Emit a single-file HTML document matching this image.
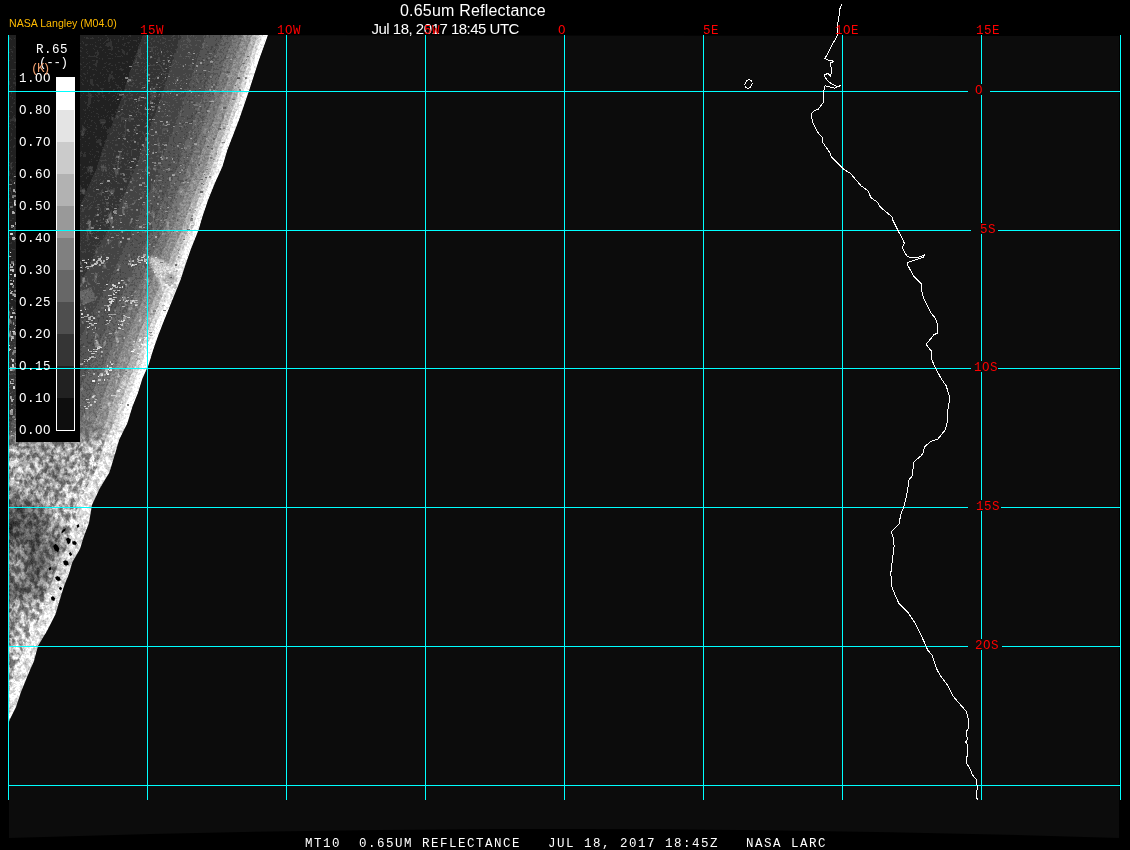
<!DOCTYPE html>
<html><head><meta charset="utf-8"><style>
html,body{margin:0;padding:0;background:#000;width:1130px;height:850px;overflow:hidden}
svg{display:block;will-change:transform}
.mono{font-family:"Liberation Mono",monospace}
.sans{font-family:"Liberation Sans",sans-serif}
</style></head><body>
<svg width="1130" height="850" viewBox="0 0 1130 850">
<defs>
<clipPath id="sw"><polygon points="268,35 259,60 249,91 239,120 227.4,150 222.5,166.5 215,183 208.5,199 202.7,216 198.6,230 191,249 185.4,265 180.5,280 174.8,294 169.2,308 163.5,322 157.9,336.5 153,350.6 148.7,364.7 142.4,378.8 138,393 132.5,406.5 127.5,423 119.3,439.4 114.4,456 109.4,472.4 99.5,489 92,505 89,523 84,536 80,549 72.5,562 68.6,575 63.4,588 59.5,601 55.6,614 47,631 38,646 34,661 27.5,676 21,692 16,707 10,719 9,722 9,722 9,35"/></clipPath>
<filter color-interpolation-filters="sRGB" id="blur" x="0" y="0" width="1130" height="850" filterUnits="userSpaceOnUse"><feGaussianBlur stdDeviation="5" result="b"/>
<feTurbulence type="fractalNoise" baseFrequency="0.2 0.15" numOctaves="3" seed="21" result="n"/>
<feColorMatrix in="n" type="matrix" values="3 0 0 0 -1  3 0 0 0 -1  3 0 0 0 -1  0 0 0 0 1" result="nc"/>
<feComposite in="b" in2="nc" operator="arithmetic" k1="0.7" k2="0.65" k3="0" k4="0"/>
</filter>
<filter color-interpolation-filters="sRGB" id="soft" x="-0.2" y="-0.2" width="1.4" height="1.4"><feGaussianBlur stdDeviation="1.5"/></filter>
<filter color-interpolation-filters="sRGB" id="cloudA" x="0" y="0" width="1" height="1">
<feTurbulence type="fractalNoise" baseFrequency="0.14 0.08" numOctaves="4" seed="3"/>
<feColorMatrix type="matrix" values="0 0 0 0 1  0 0 0 0 1  0 0 0 0 1  6 0 0 0 -3.9"/>
</filter>
<filter color-interpolation-filters="sRGB" id="tex" x="0" y="0" width="1130" height="850" filterUnits="userSpaceOnUse">
<feTurbulence type="fractalNoise" baseFrequency="0.45" numOctaves="2" seed="5" result="n"/>
<feColorMatrix in="n" type="matrix" values="2 0 0 0 -0.5  2 0 0 0 -0.5  2 0 0 0 -0.5  0 0 0 0 1" result="nc"/>
<feComposite in="SourceGraphic" in2="nc" operator="arithmetic" k1="0.25" k2="0.875" k3="0" k4="0" result="m"/>
<feComponentTransfer in="m"><feFuncR type="discrete" tableValues="0.000 0.067 0.133 0.200 0.267 0.333 0.400 0.467 0.533 0.600 0.667 0.733 0.800 0.867 0.933 1.000"/><feFuncG type="discrete" tableValues="0.000 0.067 0.133 0.200 0.267 0.333 0.400 0.467 0.533 0.600 0.667 0.733 0.800 0.867 0.933 1.000"/><feFuncB type="discrete" tableValues="0.000 0.067 0.133 0.200 0.267 0.333 0.400 0.467 0.533 0.600 0.667 0.733 0.800 0.867 0.933 1.000"/></feComponentTransfer>
</filter>
<filter color-interpolation-filters="sRGB" id="specW" x="0" y="0" width="1" height="1">
<feTurbulence type="fractalNoise" baseFrequency="0.35" numOctaves="2" seed="5"/>
<feColorMatrix type="matrix" values="0 0 0 0 1  0 0 0 0 1  0 0 0 0 1  6 0 0 0 -3.2"/>
</filter>
<filter color-interpolation-filters="sRGB" id="specK" x="0" y="0" width="1" height="1">
<feTurbulence type="fractalNoise" baseFrequency="0.35" numOctaves="2" seed="9"/>
<feColorMatrix type="matrix" values="0 0 0 0 0  0 0 0 0 0  0 0 0 0 0  6 0 0 0 -3.2"/>
</filter>
<linearGradient id="gB" x1="0" y1="415" x2="0" y2="450" gradientUnits="userSpaceOnUse">
<stop offset="0" stop-color="#fff" stop-opacity="0"/>
<stop offset="1" stop-color="#fff" stop-opacity="1"/>
</linearGradient>
<linearGradient id="gA" x1="0" y1="80" x2="0" y2="430" gradientUnits="userSpaceOnUse">
<stop offset="0" stop-color="#fff" stop-opacity="0.15"/>
<stop offset="1" stop-color="#fff" stop-opacity="1"/>
</linearGradient>
<mask id="mB"><rect x="0" y="400" width="280" height="330" fill="url(#gB)"/></mask>
<mask id="mA"><rect x="0" y="35" width="280" height="420" fill="url(#gA)"/></mask>
</defs>
<rect width="1130" height="850" fill="#000"/>
<path d="M9,35 L1119,36 L1119,838 Q565,820 9,838 Z" fill="#0c0c0c"/>
<g clip-path="url(#sw)"><g filter="url(#tex)">
<rect x="9" y="35" width="260" height="690" fill="#2c2c2c"/>
<polygon points="268.0,35.0 259.0,60.0 249.0,91.0 239.0,120.0 227.4,150.0 222.5,166.5 215.0,183.0 208.5,199.0 202.7,216.0 198.6,230.0 191.0,249.0 185.4,265.0 180.5,280.0 174.8,294.0 169.2,308.0 163.5,322.0 157.9,336.5 153.0,350.6 148.7,364.7 142.4,378.8 138.0,393.0 132.5,406.5 127.5,423.0 119.3,439.4 114.4,456.0 109.4,472.4 99.5,489.0 92.0,505.0 89.0,523.0 84.0,536.0 80.0,549.0 72.5,562.0 68.6,575.0 63.4,588.0 59.5,601.0 55.6,614.0 47.0,631.0 38.0,646.0 34.0,661.0 27.5,676.0 21.0,692.0 16.0,707.0 10.0,719.0 9.0,722.0 9.0,722.0 9.0,719.0 9.0,707.0 9.0,692.0 9.0,676.0 9.0,661.0 9.0,646.0 9.0,631.0 9.0,614.0 9.0,601.0 9.0,588.0 9.0,575.0 9.0,562.0 9.0,549.0 9.0,536.0 9.0,523.0 9.0,505.0 9.0,489.0 9.0,472.4 9.0,456.0 9.0,439.4 9.0,423.0 9.0,406.5 9.0,393.0 9.0,378.8 9.0,364.7 9.0,350.6 9.0,336.5 11.8,322.0 20.6,308.0 29.2,294.0 38.0,280.0 46.2,265.0 55.3,249.0 67.0,230.0 74.2,216.0 83.5,199.0 90.0,183.0 97.5,166.5 102.4,150.0 114.0,120.0 124.0,91.0 134.0,60.0 143.0,35.0" fill="#3c3c3c"/>
<polygon points="268.0,35.0 259.0,60.0 249.0,91.0 239.0,120.0 227.4,150.0 222.5,166.5 215.0,183.0 208.5,199.0 202.7,216.0 198.6,230.0 191.0,249.0 185.4,265.0 180.5,280.0 174.8,294.0 169.2,308.0 163.5,322.0 157.9,336.5 153.0,350.6 148.7,364.7 142.4,378.8 138.0,393.0 132.5,406.5 127.5,423.0 119.3,439.4 114.4,456.0 109.4,472.4 99.5,489.0 92.0,505.0 89.0,523.0 84.0,536.0 80.0,549.0 72.5,562.0 68.6,575.0 63.4,588.0 59.5,601.0 55.6,614.0 47.0,631.0 38.0,646.0 34.0,661.0 27.5,676.0 21.0,692.0 16.0,707.0 10.0,719.0 9.0,722.0 9.0,722.0 9.0,719.0 9.0,707.0 9.0,692.0 9.0,676.0 9.0,661.0 9.0,646.0 9.0,631.0 9.0,614.0 9.0,601.0 9.0,588.0 9.0,575.0 9.0,562.0 9.0,549.0 9.0,536.0 9.0,523.0 9.0,505.0 9.0,489.0 9.0,472.4 9.0,456.0 9.0,439.4 11.4,423.0 16.4,406.5 23.0,393.0 29.5,378.8 37.9,364.7 44.3,350.6 51.4,336.5 59.1,322.0 66.9,308.0 74.7,294.0 82.5,280.0 89.6,265.0 97.6,249.0 108.1,230.0 114.3,216.0 122.5,199.0 129.0,183.0 136.5,166.5 141.4,150.0 153.0,120.0 163.0,91.0 173.0,60.0 182.0,35.0" fill="#4a4a4a"/>
<polygon points="268.0,35.0 259.0,60.0 249.0,91.0 239.0,120.0 227.4,150.0 222.5,166.5 215.0,183.0 208.5,199.0 202.7,216.0 198.6,230.0 191.0,249.0 185.4,265.0 180.5,280.0 174.8,294.0 169.2,308.0 163.5,322.0 157.9,336.5 153.0,350.6 148.7,364.7 142.4,378.8 138.0,393.0 132.5,406.5 127.5,423.0 119.3,439.4 114.4,456.0 109.4,472.4 99.5,489.0 92.0,505.0 89.0,523.0 84.0,536.0 80.0,549.0 72.5,562.0 68.6,575.0 63.4,588.0 59.5,601.0 55.6,614.0 47.0,631.0 38.0,646.0 34.0,661.0 27.5,676.0 21.0,692.0 16.0,707.0 10.0,719.0 9.0,722.0 9.0,722.0 9.0,719.0 9.0,707.0 9.0,692.0 9.0,676.0 9.0,661.0 9.0,646.0 9.0,631.0 9.0,614.0 9.0,601.0 9.0,588.0 9.0,575.0 9.0,562.0 9.0,549.0 9.0,536.0 9.0,523.0 9.0,505.0 15.8,489.0 25.7,472.4 30.7,456.0 35.6,439.4 43.8,423.0 48.8,406.5 55.1,393.0 61.0,378.8 68.8,364.7 74.7,350.6 81.1,336.5 88.3,322.0 95.5,308.0 102.6,294.0 109.8,280.0 116.3,265.0 123.7,249.0 133.3,230.0 139.0,216.0 146.5,199.0 153.0,183.0 160.5,166.5 165.4,150.0 177.0,120.0 187.0,91.0 197.0,60.0 206.0,35.0" fill="#555555"/>
<polygon points="268.0,35.0 259.0,60.0 249.0,91.0 239.0,120.0 227.4,150.0 222.5,166.5 215.0,183.0 208.5,199.0 202.7,216.0 198.6,230.0 191.0,249.0 185.4,265.0 180.5,280.0 174.8,294.0 169.2,308.0 163.5,322.0 157.9,336.5 153.0,350.6 148.7,364.7 142.4,378.8 138.0,393.0 132.5,406.5 127.5,423.0 119.3,439.4 114.4,456.0 109.4,472.4 99.5,489.0 92.0,505.0 89.0,523.0 84.0,536.0 80.0,549.0 72.5,562.0 68.6,575.0 63.4,588.0 59.5,601.0 55.6,614.0 47.0,631.0 38.0,646.0 34.0,661.0 27.5,676.0 21.0,692.0 16.0,707.0 10.0,719.0 9.0,722.0 9.0,722.0 9.0,719.0 9.0,707.0 9.0,692.0 9.0,676.0 9.0,661.0 9.0,646.0 9.0,631.0 9.0,614.0 9.0,601.0 9.0,588.0 9.0,575.0 11.7,562.0 19.2,549.0 23.2,536.0 28.2,523.0 31.2,505.0 38.7,489.0 48.6,472.4 53.6,456.0 58.5,439.4 66.8,423.0 71.8,406.5 77.8,393.0 83.3,378.8 90.7,364.7 96.1,350.6 102.2,336.5 108.9,322.0 115.7,308.0 122.4,294.0 129.2,280.0 135.3,265.0 142.1,249.0 151.2,230.0 156.4,216.0 163.5,199.0 170.0,183.0 177.5,166.5 182.4,150.0 194.0,120.0 204.0,91.0 214.0,60.0 223.0,35.0" fill="#626262"/>
<polygon points="268.0,35.0 259.0,60.0 249.0,91.0 239.0,120.0 227.4,150.0 222.5,166.5 215.0,183.0 208.5,199.0 202.7,216.0 198.6,230.0 191.0,249.0 185.4,265.0 180.5,280.0 174.8,294.0 169.2,308.0 163.5,322.0 157.9,336.5 153.0,350.6 148.7,364.7 142.4,378.8 138.0,393.0 132.5,406.5 127.5,423.0 119.3,439.4 114.4,456.0 109.4,472.4 99.5,489.0 92.0,505.0 89.0,523.0 84.0,536.0 80.0,549.0 72.5,562.0 68.6,575.0 63.4,588.0 59.5,601.0 55.6,614.0 47.0,631.0 38.0,646.0 34.0,661.0 27.5,676.0 21.0,692.0 16.0,707.0 10.0,719.0 9.0,722.0 9.0,722.0 9.0,719.0 9.0,707.0 9.0,692.0 9.0,676.0 9.0,661.0 9.0,646.0 9.0,631.0 9.7,614.0 13.6,601.0 17.5,588.0 22.7,575.0 26.6,562.0 34.1,549.0 38.1,536.0 43.1,523.0 46.1,505.0 53.6,489.0 63.5,472.4 68.5,456.0 73.4,439.4 81.6,423.0 86.6,406.5 92.5,393.0 97.8,378.8 104.9,364.7 110.0,350.6 115.8,336.5 122.2,322.0 128.8,308.0 135.2,294.0 141.7,280.0 147.5,265.0 154.1,249.0 162.8,230.0 167.7,216.0 174.5,199.0 181.0,183.0 188.5,166.5 193.4,150.0 205.0,120.0 215.0,91.0 225.0,60.0 234.0,35.0" fill="#747474"/>
<polygon points="268.0,35.0 259.0,60.0 249.0,91.0 239.0,120.0 227.4,150.0 222.5,166.5 215.0,183.0 208.5,199.0 202.7,216.0 198.6,230.0 191.0,249.0 185.4,265.0 180.5,280.0 174.8,294.0 169.2,308.0 163.5,322.0 157.9,336.5 153.0,350.6 148.7,364.7 142.4,378.8 138.0,393.0 132.5,406.5 127.5,423.0 119.3,439.4 114.4,456.0 109.4,472.4 99.5,489.0 92.0,505.0 89.0,523.0 84.0,536.0 80.0,549.0 72.5,562.0 68.6,575.0 63.4,588.0 59.5,601.0 55.6,614.0 47.0,631.0 38.0,646.0 34.0,661.0 27.5,676.0 21.0,692.0 16.0,707.0 10.0,719.0 9.0,722.0 9.0,722.0 9.0,719.0 9.0,707.0 9.0,692.0 9.0,676.0 9.0,661.0 9.0,646.0 13.2,631.0 21.9,614.0 25.8,601.0 29.6,588.0 34.8,575.0 38.8,562.0 46.2,549.0 50.2,536.0 55.2,523.0 58.2,505.0 65.8,489.0 75.7,472.4 80.7,456.0 85.5,439.4 93.8,423.0 98.8,406.5 104.6,393.0 109.6,378.8 116.5,364.7 121.4,350.6 126.9,336.5 133.2,322.0 139.5,308.0 145.7,294.0 152.0,280.0 157.6,265.0 163.9,249.0 172.3,230.0 177.0,216.0 183.5,199.0 190.0,183.0 197.5,166.5 202.4,150.0 214.0,120.0 224.0,91.0 234.0,60.0 243.0,35.0" fill="#8c8c8c"/>
<polygon points="268.0,35.0 259.0,60.0 249.0,91.0 239.0,120.0 227.4,150.0 222.5,166.5 215.0,183.0 208.5,199.0 202.7,216.0 198.6,230.0 191.0,249.0 185.4,265.0 180.5,280.0 174.8,294.0 169.2,308.0 163.5,322.0 157.9,336.5 153.0,350.6 148.7,364.7 142.4,378.8 138.0,393.0 132.5,406.5 127.5,423.0 119.3,439.4 114.4,456.0 109.4,472.4 99.5,489.0 92.0,505.0 89.0,523.0 84.0,536.0 80.0,549.0 72.5,562.0 68.6,575.0 63.4,588.0 59.5,601.0 55.6,614.0 47.0,631.0 38.0,646.0 34.0,661.0 27.5,676.0 21.0,692.0 16.0,707.0 10.0,719.0 9.0,722.0 9.0,722.0 9.0,719.0 9.0,707.0 9.0,692.0 9.0,676.0 12.4,661.0 16.4,646.0 25.4,631.0 34.0,614.0 37.9,601.0 41.8,588.0 47.0,575.0 50.9,562.0 58.4,549.0 62.4,536.0 67.4,523.0 70.4,505.0 77.9,489.0 87.8,472.4 92.8,456.0 97.7,439.4 105.9,423.0 110.9,406.5 116.6,393.0 121.4,378.8 128.1,364.7 132.8,350.6 138.1,336.5 144.1,322.0 150.2,308.0 156.2,294.0 162.3,280.0 167.6,265.0 173.6,249.0 181.8,230.0 186.3,216.0 192.5,199.0 199.0,183.0 206.5,166.5 211.4,150.0 223.0,120.0 233.0,91.0 243.0,60.0 252.0,35.0" fill="#adadad"/>
<polygon points="268.0,35.0 259.0,60.0 249.0,91.0 239.0,120.0 227.4,150.0 222.5,166.5 215.0,183.0 208.5,199.0 202.7,216.0 198.6,230.0 191.0,249.0 185.4,265.0 180.5,280.0 174.8,294.0 169.2,308.0 163.5,322.0 157.9,336.5 153.0,350.6 148.7,364.7 142.4,378.8 138.0,393.0 132.5,406.5 127.5,423.0 119.3,439.4 114.4,456.0 109.4,472.4 99.5,489.0 92.0,505.0 89.0,523.0 84.0,536.0 80.0,549.0 72.5,562.0 68.6,575.0 63.4,588.0 59.5,601.0 55.6,614.0 47.0,631.0 38.0,646.0 34.0,661.0 27.5,676.0 21.0,692.0 16.0,707.0 10.0,719.0 9.0,722.0 9.0,722.0 9.0,719.0 9.0,707.0 9.0,692.0 14.0,676.0 20.5,661.0 24.5,646.0 33.5,631.0 42.1,614.0 46.0,601.0 49.9,588.0 55.1,575.0 59.0,562.0 66.5,549.0 70.5,536.0 75.5,523.0 78.5,505.0 86.0,489.0 95.9,472.4 100.9,456.0 105.8,439.4 114.0,423.0 119.0,406.5 124.6,393.0 129.3,378.8 135.8,364.7 140.4,350.6 145.5,336.5 151.4,322.0 157.3,308.0 163.2,294.0 169.1,280.0 174.3,265.0 180.1,249.0 188.1,230.0 192.4,216.0 198.5,199.0 205.0,183.0 212.5,166.5 217.4,150.0 229.0,120.0 239.0,91.0 249.0,60.0 258.0,35.0" fill="#d4d4d4"/>
<polygon points="268.0,35.0 259.0,60.0 249.0,91.0 239.0,120.0 227.4,150.0 222.5,166.5 215.0,183.0 208.5,199.0 202.7,216.0 198.6,230.0 191.0,249.0 185.4,265.0 180.5,280.0 174.8,294.0 169.2,308.0 163.5,322.0 157.9,336.5 153.0,350.6 148.7,364.7 142.4,378.8 138.0,393.0 132.5,406.5 127.5,423.0 119.3,439.4 114.4,456.0 109.4,472.4 99.5,489.0 92.0,505.0 89.0,523.0 84.0,536.0 80.0,549.0 72.5,562.0 68.6,575.0 63.4,588.0 59.5,601.0 55.6,614.0 47.0,631.0 38.0,646.0 34.0,661.0 27.5,676.0 21.0,692.0 16.0,707.0 10.0,719.0 9.0,722.0 9.0,722.0 9.0,719.0 9.0,707.0 13.6,692.0 20.1,676.0 26.6,661.0 30.6,646.0 39.6,631.0 48.2,614.0 52.1,601.0 56.0,588.0 61.2,575.0 65.1,562.0 72.6,549.0 76.6,536.0 81.6,523.0 84.6,505.0 92.1,489.0 102.0,472.4 107.0,456.0 111.9,439.4 120.1,423.0 125.1,406.5 130.6,393.0 135.2,378.8 141.6,364.7 146.1,350.6 151.1,336.5 156.8,322.0 162.7,308.0 168.4,294.0 174.2,280.0 179.3,265.0 185.0,249.0 192.8,230.0 197.0,216.0 203.0,199.0 209.5,183.0 217.0,166.5 221.9,150.0 233.5,120.0 243.5,91.0 253.5,60.0 262.5,35.0" fill="#f6f6f6"/>
<g filter="url(#soft)"><polygon points="148,257 158,258 170,265 185,262 194,254 190,268 184,283 176,298 168,305 163,296 160,284 153,270" fill="#dedede" opacity="0.7"/><polygon points="165,274 172,272 177,278 173,284 166,283" fill="#909090" opacity="0.7"/></g>
<g opacity="0.85"><rect x="129" y="264" width="2" height="1" fill="rgb(188,188,188)"/><rect x="131" y="265" width="1" height="2" fill="rgb(214,214,214)"/><rect x="132" y="264" width="2" height="2" fill="rgb(237,237,237)"/><rect x="134" y="264" width="3" height="1" fill="rgb(217,217,217)"/><rect x="129" y="261" width="1" height="1" fill="rgb(214,214,214)"/><rect x="133" y="264" width="2" height="1" fill="rgb(171,171,171)"/><rect x="133" y="264" width="2" height="2" fill="rgb(193,193,193)"/><rect x="137" y="258" width="1" height="1" fill="rgb(170,170,170)"/><rect x="132" y="260" width="2" height="2" fill="rgb(184,184,184)"/><rect x="137" y="261" width="2" height="1" fill="rgb(170,170,170)"/><rect x="141" y="257" width="3" height="1" fill="rgb(218,218,218)"/><rect x="137" y="259" width="2" height="1" fill="rgb(186,186,186)"/><rect x="138" y="257" width="1" height="2" fill="rgb(181,181,181)"/><rect x="138" y="260" width="3" height="1" fill="rgb(194,194,194)"/><rect x="144" y="260" width="2" height="2" fill="rgb(201,201,201)"/><rect x="143" y="256" width="2" height="1" fill="rgb(200,200,200)"/><rect x="141" y="260" width="2" height="1" fill="rgb(223,223,223)"/><rect x="138" y="262" width="3" height="1" fill="rgb(193,193,193)"/><rect x="146" y="262" width="2" height="2" fill="rgb(234,234,234)"/><rect x="141" y="259" width="2" height="1" fill="rgb(177,177,177)"/><rect x="144" y="258" width="1" height="1" fill="rgb(179,179,179)"/><rect x="143" y="254" width="3" height="2" fill="rgb(168,168,168)"/><rect x="144" y="259" width="3" height="2" fill="rgb(192,192,192)"/><rect x="153" y="257" width="1" height="2" fill="rgb(174,174,174)"/><rect x="147" y="256" width="2" height="2" fill="rgb(203,203,203)"/><rect x="151" y="261" width="3" height="1" fill="rgb(193,193,193)"/><rect x="154" y="259" width="1" height="2" fill="rgb(198,198,198)"/><rect x="152" y="258" width="2" height="1" fill="rgb(207,207,207)"/><rect x="151" y="258" width="1" height="2" fill="rgb(201,201,201)"/><rect x="150" y="262" width="2" height="1" fill="rgb(190,190,190)"/><rect x="156" y="265" width="1" height="1" fill="rgb(222,222,222)"/><rect x="155" y="257" width="2" height="1" fill="rgb(220,220,220)"/><rect x="154" y="264" width="3" height="1" fill="rgb(229,229,229)"/><rect x="153" y="261" width="2" height="1" fill="rgb(207,207,207)"/><rect x="151" y="267" width="1" height="1" fill="rgb(188,188,188)"/><rect x="154" y="267" width="2" height="2" fill="rgb(188,188,188)"/><rect x="158" y="267" width="1" height="1" fill="rgb(168,168,168)"/><rect x="159" y="265" width="1" height="2" fill="rgb(190,190,190)"/><rect x="154" y="271" width="2" height="2" fill="rgb(233,233,233)"/><rect x="154" y="267" width="3" height="1" fill="rgb(184,184,184)"/><rect x="160" y="271" width="2" height="1" fill="rgb(212,212,212)"/><rect x="153" y="270" width="1" height="1" fill="rgb(211,211,211)"/><rect x="158" y="265" width="1" height="1" fill="rgb(184,184,184)"/><rect x="160" y="272" width="3" height="1" fill="rgb(195,195,195)"/><rect x="155" y="271" width="1" height="1" fill="rgb(230,230,230)"/><rect x="164" y="272" width="1" height="1" fill="rgb(190,190,190)"/><rect x="163" y="273" width="2" height="1" fill="rgb(167,167,167)"/><rect x="162" y="271" width="3" height="1" fill="rgb(218,218,218)"/><rect x="162" y="275" width="3" height="1" fill="rgb(184,184,184)"/><rect x="162" y="278" width="1" height="2" fill="rgb(200,200,200)"/><rect x="168" y="273" width="2" height="1" fill="rgb(225,225,225)"/><rect x="167" y="273" width="1" height="2" fill="rgb(190,190,190)"/><rect x="161" y="276" width="2" height="2" fill="rgb(236,236,236)"/><rect x="167" y="273" width="2" height="1" fill="rgb(186,186,186)"/><rect x="166" y="270" width="2" height="1" fill="rgb(176,176,176)"/><rect x="167" y="270" width="2" height="1" fill="rgb(161,161,161)"/><rect x="160" y="274" width="1" height="1" fill="rgb(228,228,228)"/><rect x="170" y="273" width="2" height="1" fill="rgb(191,191,191)"/><rect x="169" y="271" width="2" height="2" fill="rgb(227,227,227)"/><rect x="176" y="270" width="2" height="2" fill="rgb(173,173,173)"/><rect x="173" y="269" width="1" height="1" fill="rgb(230,230,230)"/><rect x="174" y="271" width="2" height="2" fill="rgb(203,203,203)"/><rect x="174" y="272" width="2" height="2" fill="rgb(222,222,222)"/><rect x="174" y="274" width="1" height="1" fill="rgb(214,214,214)"/><rect x="175" y="267" width="2" height="1" fill="rgb(193,193,193)"/><rect x="163" y="279" width="3" height="2" fill="rgb(161,161,161)"/><rect x="167" y="281" width="2" height="2" fill="rgb(164,164,164)"/><rect x="164" y="275" width="2" height="1" fill="rgb(176,176,176)"/><rect x="165" y="280" width="1" height="1" fill="rgb(186,186,186)"/><rect x="162" y="276" width="2" height="2" fill="rgb(212,212,212)"/><rect x="168" y="280" width="2" height="1" fill="rgb(182,182,182)"/><rect x="165" y="281" width="2" height="1" fill="rgb(191,191,191)"/><rect x="164" y="286" width="1" height="1" fill="rgb(164,164,164)"/><rect x="166" y="281" width="3" height="1" fill="rgb(199,199,199)"/><rect x="168" y="279" width="2" height="1" fill="rgb(184,184,184)"/><rect x="164" y="285" width="1" height="1" fill="rgb(204,204,204)"/><rect x="165" y="283" width="2" height="1" fill="rgb(174,174,174)"/><rect x="168" y="284" width="2" height="1" fill="rgb(173,173,173)"/><rect x="165" y="284" width="2" height="1" fill="rgb(237,237,237)"/><rect x="169" y="285" width="2" height="1" fill="rgb(165,165,165)"/><rect x="169" y="284" width="2" height="1" fill="rgb(215,215,215)"/><rect x="173" y="286" width="2" height="2" fill="rgb(200,200,200)"/><rect x="170" y="283" width="2" height="2" fill="rgb(199,199,199)"/><rect x="170" y="282" width="2" height="2" fill="rgb(176,176,176)"/><rect x="174" y="287" width="3" height="2" fill="rgb(182,182,182)"/><rect x="172" y="282" width="1" height="1" fill="rgb(196,196,196)"/><rect x="175" y="288" width="2" height="1" fill="rgb(216,216,216)"/><rect x="173" y="284" width="3" height="2" fill="rgb(181,181,181)"/><rect x="103" y="290" width="2" height="1" fill="rgb(190,190,190)"/><rect x="104" y="290" width="2" height="1" fill="rgb(163,163,163)"/><rect x="113" y="293" width="1" height="1" fill="rgb(213,213,213)"/><rect x="109" y="289" width="3" height="1" fill="rgb(211,211,211)"/><rect x="108" y="295" width="1" height="1" fill="rgb(214,214,214)"/><rect x="109" y="295" width="3" height="1" fill="rgb(231,231,231)"/><rect x="109" y="295" width="3" height="1" fill="rgb(219,219,219)"/><rect x="106" y="284" width="2" height="1" fill="rgb(238,238,238)"/><rect x="113" y="285" width="3" height="2" fill="rgb(217,217,217)"/><rect x="115" y="287" width="3" height="1" fill="rgb(193,193,193)"/><rect x="112" y="284" width="2" height="2" fill="rgb(222,222,222)"/><rect x="112" y="287" width="1" height="2" fill="rgb(196,196,196)"/><rect x="114" y="291" width="1" height="1" fill="rgb(179,179,179)"/><rect x="115" y="292" width="2" height="1" fill="rgb(213,213,213)"/><rect x="113" y="290" width="3" height="1" fill="rgb(186,186,186)"/><rect x="117" y="286" width="1" height="2" fill="rgb(208,208,208)"/><rect x="110" y="288" width="2" height="1" fill="rgb(213,213,213)"/><rect x="113" y="286" width="2" height="1" fill="rgb(188,188,188)"/><rect x="117" y="290" width="3" height="1" fill="rgb(211,211,211)"/><rect x="118" y="282" width="2" height="2" fill="rgb(228,228,228)"/><rect x="122" y="286" width="1" height="1" fill="rgb(214,214,214)"/><rect x="122" y="287" width="1" height="1" fill="rgb(208,208,208)"/><rect x="119" y="287" width="2" height="1" fill="rgb(195,195,195)"/><rect x="121" y="280" width="2" height="1" fill="rgb(220,220,220)"/><rect x="125" y="284" width="2" height="1" fill="rgb(168,168,168)"/><rect x="123" y="280" width="1" height="1" fill="rgb(185,185,185)"/><rect x="107" y="306" width="2" height="1" fill="rgb(220,220,220)"/><rect x="105" y="305" width="2" height="1" fill="rgb(192,192,192)"/><rect x="107" y="306" width="1" height="1" fill="rgb(199,199,199)"/><rect x="108" y="307" width="2" height="2" fill="rgb(208,208,208)"/><rect x="105" y="309" width="1" height="2" fill="rgb(240,240,240)"/><rect x="108" y="309" width="2" height="2" fill="rgb(236,236,236)"/><rect x="110" y="301" width="1" height="1" fill="rgb(228,228,228)"/><rect x="107" y="305" width="2" height="1" fill="rgb(213,213,213)"/><rect x="110" y="302" width="2" height="2" fill="rgb(218,218,218)"/><rect x="109" y="301" width="2" height="2" fill="rgb(228,228,228)"/><rect x="111" y="300" width="2" height="1" fill="rgb(191,191,191)"/><rect x="111" y="301" width="3" height="1" fill="rgb(219,219,219)"/><rect x="108" y="299" width="2" height="1" fill="rgb(223,223,223)"/><rect x="113" y="299" width="2" height="1" fill="rgb(193,193,193)"/><rect x="109" y="304" width="2" height="2" fill="rgb(161,161,161)"/><rect x="111" y="299" width="2" height="2" fill="rgb(212,212,212)"/><rect x="109" y="298" width="3" height="2" fill="rgb(222,222,222)"/><rect x="113" y="297" width="2" height="1" fill="rgb(211,211,211)"/><rect x="113" y="294" width="2" height="1" fill="rgb(230,230,230)"/><rect x="106" y="320" width="2" height="1" fill="rgb(218,218,218)"/><rect x="109" y="321" width="1" height="2" fill="rgb(184,184,184)"/><rect x="107" y="323" width="2" height="1" fill="rgb(187,187,187)"/><rect x="109" y="316" width="2" height="1" fill="rgb(184,184,184)"/><rect x="109" y="320" width="2" height="1" fill="rgb(228,228,228)"/><rect x="111" y="317" width="1" height="2" fill="rgb(197,197,197)"/><rect x="110" y="314" width="3" height="1" fill="rgb(161,161,161)"/><rect x="108" y="314" width="3" height="1" fill="rgb(183,183,183)"/><rect x="113" y="314" width="3" height="1" fill="rgb(168,168,168)"/><rect x="111" y="314" width="1" height="1" fill="rgb(179,179,179)"/><rect x="122" y="323" width="1" height="1" fill="rgb(175,175,175)"/><rect x="118" y="327" width="2" height="2" fill="rgb(208,208,208)"/><rect x="118" y="328" width="3" height="1" fill="rgb(232,232,232)"/><rect x="118" y="324" width="1" height="1" fill="rgb(240,240,240)"/><rect x="122" y="329" width="2" height="1" fill="rgb(182,182,182)"/><rect x="120" y="324" width="3" height="1" fill="rgb(236,236,236)"/><rect x="121" y="324" width="2" height="2" fill="rgb(196,196,196)"/><rect x="121" y="321" width="2" height="1" fill="rgb(240,240,240)"/><rect x="118" y="320" width="2" height="1" fill="rgb(174,174,174)"/><rect x="119" y="321" width="2" height="1" fill="rgb(169,169,169)"/><rect x="127" y="323" width="2" height="1" fill="rgb(175,175,175)"/><rect x="121" y="321" width="3" height="1" fill="rgb(224,224,224)"/><rect x="121" y="320" width="1" height="1" fill="rgb(201,201,201)"/><rect x="123" y="319" width="2" height="2" fill="rgb(233,233,233)"/><rect x="123" y="318" width="2" height="2" fill="rgb(165,165,165)"/><rect x="124" y="316" width="3" height="1" fill="rgb(183,183,183)"/><rect x="127" y="317" width="3" height="1" fill="rgb(220,220,220)"/><rect x="123" y="318" width="1" height="1" fill="rgb(202,202,202)"/><rect x="123" y="317" width="3" height="2" fill="rgb(164,164,164)"/><rect x="123" y="315" width="2" height="1" fill="rgb(211,211,211)"/><rect x="85" y="308" width="1" height="2" fill="rgb(229,229,229)"/><rect x="81" y="313" width="2" height="2" fill="rgb(223,223,223)"/><rect x="80" y="310" width="2" height="1" fill="rgb(230,230,230)"/><rect x="85" y="316" width="3" height="1" fill="rgb(163,163,163)"/><rect x="87" y="314" width="2" height="2" fill="rgb(180,180,180)"/><rect x="84" y="316" width="3" height="1" fill="rgb(188,188,188)"/><rect x="90" y="316" width="3" height="1" fill="rgb(179,179,179)"/><rect x="81" y="317" width="2" height="1" fill="rgb(221,221,221)"/><rect x="88" y="317" width="2" height="1" fill="rgb(184,184,184)"/><rect x="89" y="317" width="2" height="1" fill="rgb(195,195,195)"/><rect x="87" y="314" width="2" height="2" fill="rgb(194,194,194)"/><rect x="88" y="318" width="2" height="2" fill="rgb(234,234,234)"/><rect x="91" y="320" width="2" height="1" fill="rgb(228,228,228)"/><rect x="86" y="321" width="3" height="1" fill="rgb(201,201,201)"/><rect x="93" y="317" width="2" height="2" fill="rgb(209,209,209)"/><rect x="89" y="326" width="1" height="1" fill="rgb(220,220,220)"/><rect x="88" y="318" width="3" height="2" fill="rgb(179,179,179)"/><rect x="89" y="323" width="2" height="1" fill="rgb(216,216,216)"/><rect x="95" y="327" width="1" height="2" fill="rgb(178,178,178)"/><rect x="87" y="327" width="2" height="1" fill="rgb(220,220,220)"/><rect x="91" y="324" width="3" height="2" fill="rgb(170,170,170)"/><rect x="94" y="323" width="3" height="1" fill="rgb(240,240,240)"/><rect x="91" y="323" width="1" height="2" fill="rgb(168,168,168)"/><rect x="93" y="332" width="2" height="1" fill="rgb(171,171,171)"/><rect x="92" y="329" width="1" height="1" fill="rgb(181,181,181)"/><rect x="78" y="260" width="1" height="1" fill="rgb(167,167,167)"/><rect x="80" y="267" width="2" height="1" fill="rgb(227,227,227)"/><rect x="79" y="267" width="2" height="1" fill="rgb(182,182,182)"/><rect x="87" y="267" width="2" height="1" fill="rgb(234,234,234)"/><rect x="85" y="267" width="2" height="1" fill="rgb(192,192,192)"/><rect x="82" y="260" width="3" height="1" fill="rgb(229,229,229)"/><rect x="87" y="267" width="2" height="2" fill="rgb(198,198,198)"/><rect x="84" y="262" width="2" height="1" fill="rgb(198,198,198)"/><rect x="88" y="266" width="3" height="1" fill="rgb(190,190,190)"/><rect x="86" y="266" width="2" height="2" fill="rgb(197,197,197)"/><rect x="93" y="264" width="3" height="1" fill="rgb(161,161,161)"/><rect x="86" y="262" width="1" height="2" fill="rgb(223,223,223)"/><rect x="93" y="259" width="2" height="2" fill="rgb(205,205,205)"/><rect x="91" y="265" width="2" height="2" fill="rgb(177,177,177)"/><rect x="88" y="259" width="1" height="1" fill="rgb(216,216,216)"/><rect x="95" y="264" width="2" height="1" fill="rgb(197,197,197)"/><rect x="92" y="265" width="2" height="1" fill="rgb(229,229,229)"/><rect x="96" y="261" width="2" height="1" fill="rgb(192,192,192)"/><rect x="100" y="260" width="2" height="2" fill="rgb(203,203,203)"/><rect x="97" y="260" width="1" height="1" fill="rgb(188,188,188)"/><rect x="98" y="259" width="3" height="2" fill="rgb(206,206,206)"/><rect x="99" y="264" width="2" height="2" fill="rgb(175,175,175)"/><rect x="94" y="263" width="2" height="2" fill="rgb(208,208,208)"/><rect x="101" y="256" width="1" height="2" fill="rgb(189,189,189)"/><rect x="96" y="262" width="2" height="2" fill="rgb(188,188,188)"/><rect x="98" y="258" width="3" height="2" fill="rgb(198,198,198)"/><rect x="100" y="260" width="1" height="1" fill="rgb(198,198,198)"/><rect x="103" y="260" width="2" height="2" fill="rgb(177,177,177)"/><rect x="101" y="262" width="3" height="2" fill="rgb(179,179,179)"/><rect x="106" y="257" width="3" height="2" fill="rgb(212,212,212)"/><rect x="106" y="259" width="2" height="1" fill="rgb(216,216,216)"/><rect x="119" y="300" width="2" height="1" fill="rgb(207,207,207)"/><rect x="115" y="297" width="2" height="1" fill="rgb(210,210,210)"/><rect x="122" y="306" width="3" height="1" fill="rgb(187,187,187)"/><rect x="122" y="297" width="1" height="1" fill="rgb(202,202,202)"/><rect x="125" y="301" width="2" height="1" fill="rgb(230,230,230)"/><rect x="126" y="301" width="2" height="1" fill="rgb(178,178,178)"/><rect x="127" y="297" width="2" height="1" fill="rgb(176,176,176)"/><rect x="123" y="299" width="1" height="2" fill="rgb(163,163,163)"/><rect x="130" y="302" width="2" height="2" fill="rgb(201,201,201)"/><rect x="131" y="300" width="2" height="2" fill="rgb(213,213,213)"/><rect x="126" y="300" width="3" height="1" fill="rgb(206,206,206)"/><rect x="130" y="300" width="2" height="2" fill="rgb(165,165,165)"/><rect x="131" y="295" width="2" height="1" fill="rgb(163,163,163)"/><rect x="135" y="302" width="3" height="1" fill="rgb(173,173,173)"/><rect x="127" y="301" width="1" height="1" fill="rgb(201,201,201)"/><rect x="133" y="300" width="2" height="2" fill="rgb(234,234,234)"/><rect x="132" y="301" width="2" height="1" fill="rgb(224,224,224)"/><rect x="134" y="301" width="1" height="2" fill="rgb(230,230,230)"/><rect x="135" y="300" width="3" height="1" fill="rgb(212,212,212)"/><rect x="135" y="304" width="3" height="2" fill="rgb(172,172,172)"/><rect x="136" y="304" width="2" height="1" fill="rgb(179,179,179)"/><rect x="137" y="300" width="1" height="1" fill="rgb(171,171,171)"/><rect x="135" y="305" width="2" height="1" fill="rgb(231,231,231)"/><rect x="145" y="306" width="2" height="2" fill="rgb(175,175,175)"/><rect x="80" y="363" width="3" height="2" fill="rgb(166,166,166)"/><rect x="88" y="359" width="2" height="1" fill="rgb(233,233,233)"/><rect x="84" y="359" width="3" height="1" fill="rgb(173,173,173)"/><rect x="84" y="361" width="1" height="1" fill="rgb(233,233,233)"/><rect x="87" y="360" width="1" height="2" fill="rgb(194,194,194)"/><rect x="89" y="357" width="2" height="1" fill="rgb(204,204,204)"/><rect x="93" y="357" width="3" height="1" fill="rgb(178,178,178)"/><rect x="88" y="349" width="1" height="2" fill="rgb(227,227,227)"/><rect x="89" y="358" width="2" height="1" fill="rgb(207,207,207)"/><rect x="89" y="357" width="1" height="1" fill="rgb(179,179,179)"/><rect x="92" y="357" width="1" height="1" fill="rgb(216,216,216)"/><rect x="89" y="351" width="3" height="1" fill="rgb(194,194,194)"/><rect x="92" y="356" width="2" height="1" fill="rgb(174,174,174)"/><rect x="91" y="356" width="3" height="2" fill="rgb(199,199,199)"/><rect x="94" y="353" width="1" height="1" fill="rgb(186,186,186)"/><rect x="92" y="353" width="2" height="1" fill="rgb(197,197,197)"/><rect x="93" y="351" width="3" height="1" fill="rgb(176,176,176)"/><rect x="91" y="353" width="2" height="1" fill="rgb(210,210,210)"/><rect x="95" y="349" width="1" height="1" fill="rgb(169,169,169)"/><rect x="97" y="347" width="3" height="2" fill="rgb(213,213,213)"/><rect x="95" y="351" width="2" height="1" fill="rgb(239,239,239)"/><rect x="93" y="349" width="2" height="1" fill="rgb(215,215,215)"/><rect x="98" y="346" width="3" height="2" fill="rgb(170,170,170)"/><rect x="96" y="349" width="2" height="1" fill="rgb(202,202,202)"/><rect x="99" y="346" width="1" height="2" fill="rgb(225,225,225)"/><rect x="101" y="351" width="2" height="2" fill="rgb(178,178,178)"/><rect x="100" y="347" width="2" height="1" fill="rgb(237,237,237)"/><rect x="98" y="383" width="1" height="1" fill="rgb(240,240,240)"/><rect x="92" y="380" width="3" height="2" fill="rgb(232,232,232)"/><rect x="93" y="373" width="2" height="2" fill="rgb(200,200,200)"/><rect x="98" y="379" width="3" height="2" fill="rgb(198,198,198)"/><rect x="99" y="374" width="2" height="2" fill="rgb(169,169,169)"/><rect x="98" y="379" width="1" height="1" fill="rgb(196,196,196)"/><rect x="104" y="379" width="1" height="2" fill="rgb(236,236,236)"/><rect x="98" y="376" width="1" height="1" fill="rgb(233,233,233)"/><rect x="100" y="373" width="3" height="2" fill="rgb(179,179,179)"/><rect x="104" y="374" width="2" height="2" fill="rgb(170,170,170)"/><rect x="101" y="374" width="2" height="2" fill="rgb(216,216,216)"/><rect x="106" y="373" width="2" height="1" fill="rgb(207,207,207)"/><rect x="106" y="371" width="2" height="2" fill="rgb(236,236,236)"/><rect x="107" y="373" width="2" height="1" fill="rgb(202,202,202)"/><rect x="107" y="374" width="2" height="1" fill="rgb(237,237,237)"/><rect x="106" y="370" width="2" height="1" fill="rgb(199,199,199)"/><rect x="109" y="370" width="3" height="1" fill="rgb(236,236,236)"/><rect x="105" y="369" width="3" height="2" fill="rgb(202,202,202)"/><rect x="107" y="365" width="1" height="2" fill="rgb(214,214,214)"/><rect x="106" y="368" width="2" height="1" fill="rgb(187,187,187)"/><rect x="104" y="371" width="2" height="1" fill="rgb(177,177,177)"/><rect x="108" y="368" width="1" height="2" fill="rgb(229,229,229)"/><rect x="110" y="361" width="1" height="2" fill="rgb(203,203,203)"/><rect x="111" y="363" width="3" height="1" fill="rgb(180,180,180)"/><rect x="110" y="368" width="2" height="2" fill="rgb(216,216,216)"/><rect x="111" y="364" width="2" height="1" fill="rgb(238,238,238)"/><rect x="109" y="367" width="3" height="1" fill="rgb(228,228,228)"/><rect x="110" y="368" width="3" height="1" fill="rgb(207,207,207)"/><rect x="111" y="395" width="3" height="1" fill="rgb(196,196,196)"/><rect x="113" y="394" width="3" height="1" fill="rgb(185,185,185)"/><rect x="113" y="395" width="2" height="1" fill="rgb(221,221,221)"/><rect x="116" y="394" width="1" height="2" fill="rgb(226,226,226)"/><rect x="115" y="394" width="2" height="1" fill="rgb(217,217,217)"/><rect x="116" y="394" width="3" height="1" fill="rgb(188,188,188)"/><rect x="117" y="389" width="1" height="1" fill="rgb(166,166,166)"/><rect x="114" y="395" width="3" height="1" fill="rgb(207,207,207)"/><rect x="116" y="395" width="1" height="2" fill="rgb(202,202,202)"/><rect x="117" y="391" width="2" height="1" fill="rgb(177,177,177)"/><rect x="117" y="389" width="1" height="1" fill="rgb(162,162,162)"/><rect x="117" y="395" width="3" height="1" fill="rgb(196,196,196)"/><rect x="118" y="391" width="2" height="1" fill="rgb(239,239,239)"/><rect x="117" y="390" width="3" height="2" fill="rgb(228,228,228)"/><rect x="121" y="390" width="2" height="2" fill="rgb(178,178,178)"/><rect x="119" y="389" width="2" height="1" fill="rgb(233,233,233)"/><rect x="116" y="390" width="1" height="2" fill="rgb(206,206,206)"/><rect x="123" y="388" width="1" height="1" fill="rgb(220,220,220)"/><rect x="123" y="387" width="2" height="1" fill="rgb(162,162,162)"/><rect x="120" y="386" width="2" height="2" fill="rgb(240,240,240)"/><rect x="124" y="387" width="2" height="1" fill="rgb(165,165,165)"/><rect x="120" y="386" width="2" height="2" fill="rgb(219,219,219)"/><rect x="125" y="383" width="2" height="1" fill="rgb(168,168,168)"/><rect x="121" y="376" width="1" height="1" fill="rgb(185,185,185)"/><rect x="125" y="382" width="1" height="1" fill="rgb(199,199,199)"/><rect x="116" y="380" width="3" height="1" fill="rgb(164,164,164)"/><rect x="124" y="378" width="2" height="1" fill="rgb(202,202,202)"/><rect x="85" y="408" width="3" height="1" fill="rgb(216,216,216)"/><rect x="88" y="402" width="2" height="1" fill="rgb(223,223,223)"/><rect x="84" y="406" width="2" height="1" fill="rgb(214,214,214)"/><rect x="90" y="404" width="2" height="2" fill="rgb(197,197,197)"/><rect x="88" y="402" width="2" height="1" fill="rgb(217,217,217)"/><rect x="86" y="399" width="3" height="1" fill="rgb(217,217,217)"/><rect x="94" y="401" width="2" height="2" fill="rgb(215,215,215)"/><rect x="88" y="406" width="1" height="1" fill="rgb(211,211,211)"/><rect x="87" y="402" width="2" height="1" fill="rgb(178,178,178)"/><rect x="93" y="395" width="3" height="1" fill="rgb(176,176,176)"/><rect x="95" y="399" width="2" height="1" fill="rgb(209,209,209)"/><rect x="92" y="396" width="2" height="2" fill="rgb(217,217,217)"/><rect x="94" y="395" width="1" height="2" fill="rgb(177,177,177)"/><rect x="128" y="350" width="2" height="1" fill="rgb(174,174,174)"/><rect x="132" y="350" width="3" height="2" fill="rgb(175,175,175)"/><rect x="131" y="351" width="3" height="1" fill="rgb(238,238,238)"/><rect x="131" y="354" width="3" height="1" fill="rgb(175,175,175)"/><rect x="133" y="349" width="2" height="2" fill="rgb(216,216,216)"/><rect x="138" y="347" width="2" height="2" fill="rgb(204,204,204)"/><rect x="133" y="344" width="2" height="1" fill="rgb(180,180,180)"/><rect x="133" y="341" width="2" height="1" fill="rgb(225,225,225)"/><rect x="137" y="353" width="2" height="1" fill="rgb(223,223,223)"/><rect x="139" y="346" width="2" height="1" fill="rgb(230,230,230)"/><rect x="140" y="348" width="1" height="1" fill="rgb(210,210,210)"/><rect x="141" y="344" width="3" height="1" fill="rgb(233,233,233)"/><rect x="144" y="347" width="1" height="1" fill="rgb(219,219,219)"/><rect x="138" y="341" width="2" height="1" fill="rgb(215,215,215)"/><rect x="134" y="342" width="1" height="2" fill="rgb(179,179,179)"/><rect x="140" y="343" width="2" height="1" fill="rgb(226,226,226)"/><rect x="144" y="339" width="2" height="1" fill="rgb(230,230,230)"/><rect x="140" y="345" width="1" height="2" fill="rgb(181,181,181)"/><rect x="139" y="339" width="2" height="2" fill="rgb(239,239,239)"/><rect x="141" y="337" width="1" height="1" fill="rgb(170,170,170)"/><rect x="146" y="341" width="2" height="2" fill="rgb(186,186,186)"/><rect x="144" y="337" width="1" height="1" fill="rgb(240,240,240)"/><rect x="141" y="338" width="2" height="1" fill="rgb(191,191,191)"/><rect x="146" y="335" width="2" height="1" fill="rgb(169,169,169)"/><rect x="145" y="337" width="3" height="1" fill="rgb(219,219,219)"/><rect x="147" y="341" width="2" height="2" fill="rgb(200,200,200)"/><rect x="146" y="332" width="3" height="1" fill="rgb(207,207,207)"/><rect x="146" y="336" width="2" height="1" fill="rgb(175,175,175)"/><rect x="148" y="338" width="1" height="1" fill="rgb(197,197,197)"/><rect x="81" y="205" width="2" height="1" fill="rgb(163,163,163)"/><rect x="137" y="317" width="2" height="1" fill="rgb(155,155,155)"/><rect x="86" y="223" width="3" height="1" fill="rgb(101,101,101)"/><rect x="100" y="408" width="2" height="1" fill="rgb(96,96,96)"/><rect x="146" y="154" width="3" height="1" fill="rgb(158,158,158)"/><rect x="243" y="53" width="2" height="1" fill="rgb(136,136,136)"/><rect x="109" y="333" width="3" height="1" fill="rgb(162,162,162)"/><rect x="138" y="258" width="2" height="1" fill="rgb(139,139,139)"/><rect x="95" y="237" width="2" height="2" fill="rgb(168,168,168)"/><rect x="121" y="94" width="3" height="1" fill="rgb(133,133,133)"/><rect x="138" y="256" width="2" height="1" fill="rgb(167,167,167)"/><rect x="128" y="238" width="1" height="1" fill="rgb(107,107,107)"/><rect x="170" y="242" width="2" height="1" fill="rgb(168,168,168)"/><rect x="168" y="168" width="2" height="2" fill="rgb(133,133,133)"/><rect x="127" y="238" width="3" height="2" fill="rgb(162,162,162)"/><rect x="117" y="161" width="2" height="1" fill="rgb(104,104,104)"/><rect x="162" y="305" width="3" height="1" fill="rgb(164,164,164)"/><rect x="91" y="264" width="3" height="1" fill="rgb(157,157,157)"/><rect x="97" y="283" width="3" height="1" fill="rgb(121,121,121)"/><rect x="135" y="62" width="1" height="1" fill="rgb(92,92,92)"/><rect x="146" y="213" width="3" height="2" fill="rgb(116,116,116)"/><rect x="106" y="202" width="3" height="2" fill="rgb(97,97,97)"/><rect x="98" y="311" width="2" height="2" fill="rgb(151,151,151)"/><rect x="149" y="244" width="2" height="1" fill="rgb(158,158,158)"/><rect x="169" y="177" width="2" height="2" fill="rgb(151,151,151)"/><rect x="203" y="121" width="2" height="1" fill="rgb(128,128,128)"/><rect x="104" y="305" width="3" height="1" fill="rgb(161,161,161)"/><rect x="207" y="151" width="3" height="1" fill="rgb(134,134,134)"/><rect x="184" y="157" width="1" height="1" fill="rgb(146,146,146)"/><rect x="127" y="129" width="2" height="2" fill="rgb(124,124,124)"/><rect x="164" y="101" width="2" height="1" fill="rgb(96,96,96)"/><rect x="102" y="298" width="2" height="1" fill="rgb(102,102,102)"/><rect x="112" y="203" width="1" height="2" fill="rgb(107,107,107)"/><rect x="188" y="52" width="2" height="1" fill="rgb(150,150,150)"/><rect x="170" y="227" width="2" height="1" fill="rgb(126,126,126)"/><rect x="175" y="83" width="1" height="1" fill="rgb(143,143,143)"/><rect x="116" y="376" width="1" height="1" fill="rgb(153,153,153)"/><rect x="141" y="119" width="2" height="1" fill="rgb(91,91,91)"/><rect x="144" y="160" width="2" height="1" fill="rgb(148,148,148)"/><rect x="85" y="365" width="2" height="1" fill="rgb(132,132,132)"/><rect x="180" y="110" width="2" height="2" fill="rgb(113,113,113)"/><rect x="214" y="55" width="2" height="2" fill="rgb(114,114,114)"/><rect x="129" y="115" width="3" height="1" fill="rgb(155,155,155)"/><rect x="165" y="171" width="1" height="1" fill="rgb(107,107,107)"/><rect x="209" y="53" width="3" height="1" fill="rgb(132,132,132)"/><rect x="129" y="162" width="1" height="1" fill="rgb(136,136,136)"/><rect x="157" y="306" width="1" height="1" fill="rgb(129,129,129)"/><rect x="152" y="109" width="2" height="2" fill="rgb(105,105,105)"/><rect x="181" y="186" width="2" height="1" fill="rgb(109,109,109)"/><rect x="120" y="188" width="3" height="2" fill="rgb(117,117,117)"/><rect x="80" y="270" width="3" height="2" fill="rgb(136,136,136)"/><rect x="177" y="79" width="1" height="2" fill="rgb(154,154,154)"/><rect x="165" y="125" width="2" height="1" fill="rgb(156,156,156)"/><rect x="114" y="213" width="3" height="1" fill="rgb(155,155,155)"/><rect x="191" y="215" width="2" height="2" fill="rgb(143,143,143)"/><rect x="190" y="219" width="3" height="2" fill="rgb(129,129,129)"/><rect x="111" y="318" width="1" height="2" fill="rgb(117,117,117)"/><rect x="175" y="264" width="2" height="2" fill="rgb(98,98,98)"/><rect x="178" y="250" width="1" height="1" fill="rgb(94,94,94)"/><rect x="198" y="156" width="2" height="2" fill="rgb(143,143,143)"/><rect x="96" y="189" width="3" height="1" fill="rgb(138,138,138)"/><rect x="127" y="80" width="2" height="2" fill="rgb(134,134,134)"/><rect x="119" y="94" width="3" height="2" fill="rgb(106,106,106)"/><rect x="132" y="319" width="1" height="1" fill="rgb(128,128,128)"/><rect x="106" y="221" width="3" height="2" fill="rgb(138,138,138)"/><rect x="116" y="355" width="2" height="1" fill="rgb(125,125,125)"/><rect x="125" y="120" width="1" height="1" fill="rgb(143,143,143)"/><rect x="107" y="379" width="1" height="1" fill="rgb(166,166,166)"/><rect x="178" y="62" width="1" height="1" fill="rgb(95,95,95)"/><rect x="174" y="199" width="2" height="1" fill="rgb(107,107,107)"/><rect x="155" y="236" width="2" height="2" fill="rgb(166,166,166)"/><rect x="118" y="138" width="2" height="1" fill="rgb(128,128,128)"/><rect x="152" y="152" width="2" height="2" fill="rgb(144,144,144)"/><rect x="178" y="256" width="2" height="2" fill="rgb(138,138,138)"/><rect x="112" y="341" width="3" height="1" fill="rgb(109,109,109)"/><rect x="196" y="161" width="3" height="1" fill="rgb(118,118,118)"/><rect x="131" y="161" width="3" height="1" fill="rgb(161,161,161)"/><rect x="150" y="203" width="2" height="1" fill="rgb(121,121,121)"/><rect x="183" y="144" width="1" height="1" fill="rgb(137,137,137)"/><rect x="156" y="84" width="2" height="1" fill="rgb(124,124,124)"/><rect x="132" y="190" width="1" height="1" fill="rgb(114,114,114)"/><rect x="141" y="298" width="2" height="1" fill="rgb(128,128,128)"/><rect x="127" y="404" width="2" height="2" fill="rgb(105,105,105)"/><rect x="114" y="310" width="2" height="2" fill="rgb(131,131,131)"/><rect x="105" y="337" width="2" height="1" fill="rgb(123,123,123)"/><rect x="100" y="183" width="3" height="1" fill="rgb(150,150,150)"/><rect x="115" y="332" width="2" height="1" fill="rgb(130,130,130)"/><rect x="132" y="203" width="2" height="2" fill="rgb(108,108,108)"/><rect x="186" y="56" width="3" height="1" fill="rgb(109,109,109)"/><rect x="204" y="123" width="2" height="1" fill="rgb(160,160,160)"/><rect x="85" y="292" width="2" height="1" fill="rgb(152,152,152)"/><rect x="105" y="221" width="2" height="1" fill="rgb(107,107,107)"/><rect x="100" y="317" width="1" height="2" fill="rgb(94,94,94)"/><rect x="136" y="360" width="1" height="1" fill="rgb(142,142,142)"/><rect x="162" y="101" width="1" height="2" fill="rgb(109,109,109)"/><rect x="193" y="53" width="2" height="1" fill="rgb(169,169,169)"/><rect x="189" y="56" width="3" height="1" fill="rgb(92,92,92)"/><rect x="153" y="246" width="2" height="1" fill="rgb(154,154,154)"/><rect x="232" y="90" width="2" height="1" fill="rgb(114,114,114)"/><rect x="144" y="279" width="2" height="1" fill="rgb(140,140,140)"/><rect x="128" y="79" width="3" height="2" fill="rgb(121,121,121)"/><rect x="96" y="416" width="1" height="2" fill="rgb(94,94,94)"/><rect x="199" y="85" width="3" height="1" fill="rgb(91,91,91)"/><rect x="153" y="310" width="3" height="2" fill="rgb(132,132,132)"/><rect x="180" y="85" width="1" height="1" fill="rgb(117,117,117)"/><rect x="148" y="260" width="1" height="2" fill="rgb(125,125,125)"/><rect x="137" y="62" width="2" height="1" fill="rgb(116,116,116)"/><rect x="86" y="267" width="3" height="1" fill="rgb(128,128,128)"/><rect x="207" y="110" width="3" height="2" fill="rgb(159,159,159)"/><rect x="120" y="173" width="2" height="2" fill="rgb(100,100,100)"/><rect x="196" y="70" width="1" height="1" fill="rgb(167,167,167)"/><rect x="108" y="197" width="1" height="2" fill="rgb(124,124,124)"/><rect x="95" y="340" width="2" height="1" fill="rgb(160,160,160)"/><rect x="84" y="301" width="1" height="2" fill="rgb(127,127,127)"/><rect x="228" y="80" width="2" height="2" fill="rgb(139,139,139)"/><rect x="204" y="167" width="1" height="1" fill="rgb(146,146,146)"/><rect x="176" y="183" width="2" height="1" fill="rgb(113,113,113)"/><rect x="130" y="209" width="3" height="1" fill="rgb(93,93,93)"/><rect x="177" y="83" width="2" height="1" fill="rgb(91,91,91)"/><rect x="172" y="158" width="1" height="2" fill="rgb(161,161,161)"/><rect x="160" y="262" width="3" height="1" fill="rgb(107,107,107)"/><rect x="189" y="150" width="2" height="1" fill="rgb(111,111,111)"/><rect x="147" y="211" width="3" height="1" fill="rgb(136,136,136)"/><rect x="194" y="143" width="3" height="2" fill="rgb(168,168,168)"/><rect x="220" y="122" width="2" height="1" fill="rgb(140,140,140)"/><rect x="137" y="173" width="2" height="1" fill="rgb(132,132,132)"/><rect x="97" y="209" width="2" height="1" fill="rgb(131,131,131)"/><rect x="91" y="273" width="3" height="1" fill="rgb(112,112,112)"/><rect x="133" y="158" width="3" height="2" fill="rgb(121,121,121)"/><rect x="181" y="171" width="3" height="1" fill="rgb(104,104,104)"/><rect x="107" y="395" width="2" height="2" fill="rgb(160,160,160)"/><rect x="163" y="60" width="2" height="1" fill="rgb(127,127,127)"/><rect x="137" y="358" width="3" height="2" fill="rgb(153,153,153)"/><rect x="203" y="101" width="2" height="2" fill="rgb(109,109,109)"/><rect x="125" y="77" width="3" height="2" fill="rgb(141,141,141)"/><rect x="88" y="372" width="1" height="1" fill="rgb(158,158,158)"/><rect x="213" y="90" width="2" height="1" fill="rgb(168,168,168)"/><rect x="129" y="66" width="3" height="1" fill="rgb(145,145,145)"/><rect x="232" y="89" width="2" height="2" fill="rgb(156,156,156)"/><rect x="97" y="256" width="2" height="1" fill="rgb(137,137,137)"/><rect x="109" y="195" width="2" height="1" fill="rgb(93,93,93)"/><rect x="157" y="229" width="1" height="1" fill="rgb(108,108,108)"/><rect x="169" y="179" width="2" height="2" fill="rgb(151,151,151)"/><rect x="200" y="179" width="3" height="1" fill="rgb(98,98,98)"/><rect x="118" y="161" width="1" height="1" fill="rgb(133,133,133)"/><rect x="87" y="290" width="2" height="2" fill="rgb(121,121,121)"/><rect x="120" y="241" width="2" height="2" fill="rgb(144,144,144)"/><rect x="99" y="405" width="3" height="2" fill="rgb(113,113,113)"/><rect x="152" y="119" width="3" height="1" fill="rgb(168,168,168)"/><rect x="82" y="377" width="3" height="1" fill="rgb(90,90,90)"/><rect x="137" y="311" width="1" height="2" fill="rgb(103,103,103)"/><rect x="83" y="346" width="2" height="1" fill="rgb(115,115,115)"/><rect x="164" y="219" width="3" height="2" fill="rgb(130,130,130)"/><rect x="102" y="271" width="1" height="1" fill="rgb(135,135,135)"/><rect x="143" y="160" width="1" height="2" fill="rgb(107,107,107)"/><rect x="188" y="166" width="1" height="1" fill="rgb(137,137,137)"/><rect x="101" y="307" width="3" height="2" fill="rgb(107,107,107)"/><rect x="128" y="263" width="3" height="2" fill="rgb(158,158,158)"/><rect x="84" y="307" width="2" height="2" fill="rgb(111,111,111)"/><rect x="176" y="231" width="2" height="1" fill="rgb(169,169,169)"/><rect x="206" y="70" width="1" height="1" fill="rgb(107,107,107)"/><rect x="185" y="122" width="3" height="1" fill="rgb(152,152,152)"/><rect x="97" y="204" width="3" height="1" fill="rgb(100,100,100)"/><rect x="83" y="259" width="2" height="1" fill="rgb(94,94,94)"/><rect x="155" y="152" width="2" height="1" fill="rgb(162,162,162)"/><rect x="170" y="253" width="1" height="1" fill="rgb(159,159,159)"/><rect x="101" y="355" width="1" height="2" fill="rgb(146,146,146)"/><rect x="141" y="88" width="2" height="1" fill="rgb(94,94,94)"/><rect x="154" y="216" width="1" height="1" fill="rgb(105,105,105)"/><rect x="123" y="337" width="2" height="2" fill="rgb(168,168,168)"/><rect x="153" y="284" width="2" height="1" fill="rgb(116,116,116)"/><rect x="112" y="247" width="2" height="1" fill="rgb(127,127,127)"/><rect x="187" y="157" width="1" height="1" fill="rgb(142,142,142)"/><rect x="125" y="371" width="2" height="1" fill="rgb(108,108,108)"/><rect x="121" y="231" width="2" height="2" fill="rgb(143,143,143)"/><rect x="198" y="189" width="1" height="1" fill="rgb(155,155,155)"/><rect x="82" y="375" width="3" height="1" fill="rgb(164,164,164)"/><rect x="161" y="51" width="1" height="2" fill="rgb(148,148,148)"/><rect x="86" y="285" width="1" height="2" fill="rgb(140,140,140)"/><rect x="176" y="131" width="2" height="1" fill="rgb(124,124,124)"/><rect x="181" y="169" width="2" height="2" fill="rgb(152,152,152)"/><rect x="149" y="332" width="3" height="1" fill="rgb(105,105,105)"/><rect x="113" y="394" width="3" height="1" fill="rgb(144,144,144)"/><rect x="146" y="125" width="2" height="2" fill="rgb(128,128,128)"/><rect x="121" y="109" width="2" height="1" fill="rgb(136,136,136)"/><rect x="179" y="143" width="2" height="1" fill="rgb(140,140,140)"/><rect x="84" y="281" width="2" height="1" fill="rgb(101,101,101)"/><rect x="163" y="310" width="3" height="1" fill="rgb(106,106,106)"/><rect x="114" y="270" width="3" height="1" fill="rgb(91,91,91)"/><rect x="232" y="99" width="3" height="1" fill="rgb(103,103,103)"/><rect x="199" y="88" width="2" height="1" fill="rgb(138,138,138)"/><rect x="117" y="99" width="2" height="1" fill="rgb(157,157,157)"/><rect x="106" y="258" width="2" height="1" fill="rgb(134,134,134)"/><rect x="82" y="317" width="2" height="1" fill="rgb(168,168,168)"/><rect x="234" y="82" width="1" height="2" fill="rgb(139,139,139)"/><rect x="158" y="180" width="2" height="1" fill="rgb(125,125,125)"/><rect x="141" y="289" width="2" height="2" fill="rgb(93,93,93)"/><rect x="154" y="162" width="2" height="2" fill="rgb(140,140,140)"/><rect x="213" y="159" width="2" height="1" fill="rgb(139,139,139)"/><rect x="181" y="92" width="1" height="2" fill="rgb(91,91,91)"/><rect x="134" y="99" width="3" height="1" fill="rgb(159,159,159)"/><rect x="247" y="56" width="2" height="1" fill="rgb(95,95,95)"/><rect x="168" y="197" width="3" height="1" fill="rgb(141,141,141)"/><rect x="180" y="80" width="2" height="1" fill="rgb(100,100,100)"/><rect x="154" y="165" width="2" height="1" fill="rgb(158,158,158)"/><rect x="142" y="171" width="1" height="1" fill="rgb(145,145,145)"/><rect x="240" y="71" width="3" height="1" fill="rgb(148,148,148)"/><rect x="170" y="277" width="2" height="1" fill="rgb(91,91,91)"/><rect x="118" y="111" width="2" height="1" fill="rgb(137,137,137)"/><rect x="144" y="97" width="2" height="2" fill="rgb(105,105,105)"/><rect x="150" y="335" width="3" height="1" fill="rgb(157,157,157)"/><rect x="161" y="74" width="1" height="1" fill="rgb(148,148,148)"/><rect x="183" y="239" width="2" height="1" fill="rgb(110,110,110)"/><rect x="212" y="144" width="1" height="1" fill="rgb(155,155,155)"/><rect x="150" y="51" width="1" height="1" fill="rgb(95,95,95)"/><rect x="147" y="225" width="2" height="1" fill="rgb(94,94,94)"/><rect x="105" y="324" width="2" height="1" fill="rgb(143,143,143)"/><rect x="94" y="389" width="1" height="2" fill="rgb(137,137,137)"/><rect x="159" y="94" width="1" height="1" fill="rgb(118,118,118)"/><rect x="120" y="403" width="3" height="1" fill="rgb(129,129,129)"/><rect x="146" y="171" width="1" height="1" fill="rgb(115,115,115)"/><rect x="122" y="158" width="2" height="1" fill="rgb(137,137,137)"/><rect x="117" y="269" width="2" height="2" fill="rgb(159,159,159)"/><rect x="124" y="331" width="1" height="1" fill="rgb(93,93,93)"/><rect x="184" y="136" width="1" height="1" fill="rgb(90,90,90)"/><rect x="108" y="331" width="2" height="1" fill="rgb(116,116,116)"/><rect x="157" y="246" width="3" height="1" fill="rgb(108,108,108)"/><rect x="150" y="313" width="2" height="2" fill="rgb(142,142,142)"/><rect x="117" y="309" width="1" height="2" fill="rgb(102,102,102)"/><rect x="111" y="237" width="3" height="1" fill="rgb(165,165,165)"/><rect x="128" y="260" width="2" height="1" fill="rgb(127,127,127)"/><rect x="184" y="147" width="3" height="2" fill="rgb(131,131,131)"/><rect x="183" y="168" width="1" height="1" fill="rgb(107,107,107)"/><rect x="218" y="108" width="3" height="1" fill="rgb(142,142,142)"/><rect x="198" y="95" width="2" height="1" fill="rgb(129,129,129)"/><rect x="90" y="221" width="1" height="1" fill="rgb(128,128,128)"/><rect x="148" y="65" width="2" height="1" fill="rgb(101,101,101)"/><rect x="223" y="128" width="2" height="1" fill="rgb(112,112,112)"/><rect x="210" y="61" width="3" height="2" fill="rgb(160,160,160)"/><rect x="190" y="101" width="2" height="1" fill="rgb(91,91,91)"/><rect x="169" y="66" width="2" height="1" fill="rgb(115,115,115)"/><rect x="160" y="207" width="1" height="2" fill="rgb(165,165,165)"/><rect x="154" y="103" width="1" height="1" fill="rgb(115,115,115)"/><rect x="148" y="222" width="2" height="1" fill="rgb(132,132,132)"/><rect x="149" y="78" width="1" height="1" fill="rgb(163,163,163)"/><rect x="151" y="135" width="3" height="1" fill="rgb(138,138,138)"/><rect x="190" y="181" width="2" height="1" fill="rgb(125,125,125)"/><rect x="145" y="107" width="1" height="2" fill="rgb(121,121,121)"/><rect x="160" y="175" width="3" height="1" fill="rgb(101,101,101)"/><rect x="222" y="107" width="2" height="2" fill="rgb(157,157,157)"/><rect x="136" y="101" width="1" height="1" fill="rgb(135,135,135)"/><rect x="142" y="144" width="2" height="2" fill="rgb(154,154,154)"/><rect x="205" y="114" width="1" height="1" fill="rgb(118,118,118)"/><rect x="168" y="60" width="2" height="1" fill="rgb(150,150,150)"/><rect x="140" y="153" width="2" height="1" fill="rgb(102,102,102)"/><rect x="213" y="101" width="1" height="1" fill="rgb(163,163,163)"/><rect x="115" y="212" width="2" height="1" fill="rgb(112,112,112)"/><rect x="206" y="99" width="2" height="2" fill="rgb(93,93,93)"/><rect x="170" y="185" width="2" height="2" fill="rgb(114,114,114)"/><rect x="114" y="210" width="3" height="2" fill="rgb(129,129,129)"/><rect x="238" y="87" width="1" height="1" fill="rgb(118,118,118)"/><rect x="203" y="59" width="2" height="2" fill="rgb(115,115,115)"/><rect x="164" y="204" width="2" height="1" fill="rgb(97,97,97)"/><rect x="192" y="59" width="2" height="1" fill="rgb(157,157,157)"/><rect x="97" y="214" width="2" height="2" fill="rgb(140,140,140)"/><rect x="181" y="163" width="2" height="1" fill="rgb(110,110,110)"/><rect x="159" y="190" width="3" height="2" fill="rgb(130,130,130)"/><rect x="143" y="87" width="2" height="1" fill="rgb(165,165,165)"/><rect x="160" y="206" width="2" height="1" fill="rgb(112,112,112)"/><rect x="107" y="190" width="3" height="2" fill="rgb(94,94,94)"/><rect x="209" y="89" width="2" height="2" fill="rgb(162,162,162)"/><rect x="196" y="74" width="2" height="2" fill="rgb(99,99,99)"/><rect x="138" y="99" width="2" height="2" fill="rgb(101,101,101)"/><rect x="129" y="207" width="2" height="1" fill="rgb(91,91,91)"/><rect x="211" y="104" width="1" height="1" fill="rgb(122,122,122)"/><rect x="126" y="201" width="1" height="1" fill="rgb(146,146,146)"/><rect x="105" y="191" width="3" height="1" fill="rgb(138,138,138)"/><rect x="193" y="120" width="3" height="2" fill="rgb(118,118,118)"/><rect x="235" y="85" width="1" height="1" fill="rgb(92,92,92)"/><rect x="136" y="114" width="1" height="1" fill="rgb(111,111,111)"/><rect x="177" y="219" width="1" height="2" fill="rgb(101,101,101)"/><rect x="131" y="118" width="3" height="2" fill="rgb(93,93,93)"/><rect x="159" y="135" width="3" height="1" fill="rgb(96,96,96)"/><rect x="226" y="74" width="2" height="1" fill="rgb(160,160,160)"/><rect x="130" y="189" width="2" height="2" fill="rgb(126,126,126)"/><rect x="225" y="110" width="3" height="2" fill="rgb(160,160,160)"/><rect x="181" y="210" width="2" height="1" fill="rgb(144,144,144)"/><rect x="163" y="71" width="3" height="1" fill="rgb(102,102,102)"/><rect x="234" y="60" width="2" height="1" fill="rgb(150,150,150)"/><rect x="165" y="211" width="3" height="1" fill="rgb(152,152,152)"/><rect x="166" y="221" width="3" height="1" fill="rgb(137,137,137)"/><rect x="156" y="219" width="3" height="1" fill="rgb(123,123,123)"/><rect x="198" y="136" width="2" height="2" fill="rgb(97,97,97)"/><rect x="173" y="83" width="1" height="1" fill="rgb(134,134,134)"/><rect x="156" y="205" width="2" height="2" fill="rgb(97,97,97)"/><rect x="113" y="211" width="3" height="2" fill="rgb(150,150,150)"/><rect x="192" y="161" width="2" height="1" fill="rgb(140,140,140)"/><rect x="120" y="222" width="2" height="1" fill="rgb(147,147,147)"/><rect x="142" y="87" width="2" height="1" fill="rgb(106,106,106)"/><rect x="242" y="63" width="3" height="1" fill="rgb(108,108,108)"/><rect x="171" y="209" width="1" height="1" fill="rgb(139,139,139)"/><rect x="161" y="158" width="2" height="2" fill="rgb(148,148,148)"/><rect x="191" y="225" width="3" height="1" fill="rgb(143,143,143)"/><rect x="186" y="83" width="1" height="1" fill="rgb(162,162,162)"/><rect x="120" y="199" width="2" height="1" fill="rgb(123,123,123)"/><rect x="179" y="126" width="3" height="1" fill="rgb(112,112,112)"/><rect x="221" y="106" width="3" height="1" fill="rgb(140,140,140)"/><rect x="160" y="220" width="2" height="1" fill="rgb(150,150,150)"/><rect x="100" y="225" width="1" height="1" fill="rgb(128,128,128)"/><rect x="148" y="113" width="1" height="1" fill="rgb(107,107,107)"/><rect x="158" y="111" width="2" height="1" fill="rgb(143,143,143)"/><rect x="205" y="167" width="3" height="1" fill="rgb(142,142,142)"/><rect x="126" y="192" width="2" height="1" fill="rgb(155,155,155)"/><rect x="193" y="201" width="3" height="1" fill="rgb(157,157,157)"/><rect x="191" y="218" width="2" height="1" fill="rgb(97,97,97)"/><rect x="191" y="101" width="2" height="2" fill="rgb(115,115,115)"/><rect x="152" y="106" width="3" height="2" fill="rgb(105,105,105)"/><rect x="183" y="181" width="3" height="2" fill="rgb(147,147,147)"/><rect x="153" y="88" width="2" height="1" fill="rgb(110,110,110)"/><rect x="170" y="210" width="1" height="1" fill="rgb(93,93,93)"/><rect x="212" y="127" width="2" height="1" fill="rgb(118,118,118)"/><rect x="181" y="180" width="3" height="2" fill="rgb(92,92,92)"/><rect x="96" y="215" width="1" height="1" fill="rgb(106,106,106)"/><rect x="149" y="175" width="1" height="1" fill="rgb(122,122,122)"/><rect x="118" y="168" width="2" height="1" fill="rgb(138,138,138)"/><rect x="149" y="213" width="2" height="1" fill="rgb(128,128,128)"/><rect x="124" y="180" width="3" height="2" fill="rgb(103,103,103)"/><rect x="150" y="56" width="2" height="2" fill="rgb(126,126,126)"/><rect x="223" y="110" width="1" height="1" fill="rgb(125,125,125)"/><rect x="123" y="174" width="2" height="2" fill="rgb(128,128,128)"/><rect x="189" y="90" width="2" height="1" fill="rgb(141,141,141)"/><rect x="140" y="177" width="1" height="2" fill="rgb(153,153,153)"/><rect x="160" y="240" width="3" height="1" fill="rgb(139,139,139)"/><rect x="144" y="191" width="2" height="1" fill="rgb(118,118,118)"/><rect x="142" y="182" width="3" height="2" fill="rgb(135,135,135)"/><rect x="134" y="149" width="2" height="1" fill="rgb(102,102,102)"/><rect x="147" y="142" width="2" height="2" fill="rgb(132,132,132)"/><rect x="187" y="176" width="2" height="2" fill="rgb(129,129,129)"/><rect x="136" y="133" width="2" height="1" fill="rgb(164,164,164)"/><rect x="148" y="109" width="3" height="1" fill="rgb(164,164,164)"/><rect x="152" y="162" width="3" height="1" fill="rgb(154,154,154)"/><rect x="176" y="77" width="2" height="1" fill="rgb(96,96,96)"/><rect x="179" y="216" width="2" height="1" fill="rgb(142,142,142)"/><rect x="96" y="238" width="3" height="1" fill="rgb(130,130,130)"/><rect x="177" y="215" width="1" height="1" fill="rgb(132,132,132)"/><rect x="194" y="172" width="1" height="1" fill="rgb(147,147,147)"/><rect x="158" y="106" width="2" height="2" fill="rgb(110,110,110)"/><rect x="143" y="146" width="1" height="1" fill="rgb(145,145,145)"/><rect x="171" y="172" width="3" height="1" fill="rgb(90,90,90)"/><rect x="230" y="62" width="2" height="1" fill="rgb(131,131,131)"/><rect x="148" y="195" width="1" height="2" fill="rgb(90,90,90)"/><rect x="187" y="171" width="2" height="1" fill="rgb(106,106,106)"/><rect x="195" y="74" width="2" height="1" fill="rgb(98,98,98)"/><rect x="167" y="207" width="2" height="1" fill="rgb(156,156,156)"/><rect x="180" y="165" width="2" height="1" fill="rgb(152,152,152)"/><rect x="211" y="121" width="3" height="1" fill="rgb(119,119,119)"/><rect x="139" y="96" width="2" height="2" fill="rgb(92,92,92)"/><rect x="198" y="164" width="2" height="2" fill="rgb(94,94,94)"/><rect x="164" y="124" width="1" height="2" fill="rgb(96,96,96)"/><rect x="143" y="177" width="1" height="1" fill="rgb(104,104,104)"/><rect x="188" y="132" width="2" height="1" fill="rgb(109,109,109)"/><rect x="170" y="93" width="1" height="1" fill="rgb(143,143,143)"/><rect x="142" y="177" width="2" height="2" fill="rgb(107,107,107)"/><rect x="135" y="132" width="1" height="1" fill="rgb(104,104,104)"/><rect x="149" y="200" width="2" height="1" fill="rgb(156,156,156)"/><rect x="152" y="235" width="3" height="1" fill="rgb(110,110,110)"/><rect x="200" y="62" width="2" height="2" fill="rgb(151,151,151)"/><rect x="232" y="116" width="1" height="1" fill="rgb(163,163,163)"/><rect x="194" y="179" width="1" height="2" fill="rgb(99,99,99)"/><rect x="194" y="189" width="2" height="2" fill="rgb(119,119,119)"/><rect x="124" y="139" width="2" height="1" fill="rgb(96,96,96)"/><rect x="229" y="73" width="1" height="1" fill="rgb(136,136,136)"/><rect x="167" y="203" width="1" height="1" fill="rgb(95,95,95)"/><rect x="238" y="57" width="2" height="1" fill="rgb(135,135,135)"/><rect x="96" y="220" width="2" height="2" fill="rgb(101,101,101)"/><rect x="195" y="124" width="1" height="1" fill="rgb(141,141,141)"/><rect x="162" y="233" width="3" height="2" fill="rgb(151,151,151)"/><rect x="133" y="203" width="2" height="1" fill="rgb(106,106,106)"/><rect x="201" y="184" width="2" height="1" fill="rgb(143,143,143)"/><rect x="143" y="224" width="3" height="1" fill="rgb(138,138,138)"/><rect x="138" y="199" width="2" height="1" fill="rgb(152,152,152)"/><rect x="204" y="76" width="1" height="1" fill="rgb(123,123,123)"/><rect x="209" y="176" width="2" height="2" fill="rgb(133,133,133)"/><rect x="149" y="151" width="1" height="1" fill="rgb(121,121,121)"/><rect x="154" y="144" width="3" height="1" fill="rgb(161,161,161)"/><rect x="131" y="220" width="1" height="2" fill="rgb(110,110,110)"/><rect x="172" y="149" width="3" height="1" fill="rgb(99,99,99)"/><rect x="170" y="194" width="2" height="1" fill="rgb(96,96,96)"/><rect x="164" y="149" width="3" height="1" fill="rgb(120,120,120)"/><rect x="203" y="70" width="3" height="1" fill="rgb(153,153,153)"/><rect x="212" y="138" width="3" height="2" fill="rgb(92,92,92)"/><rect x="204" y="74" width="1" height="1" fill="rgb(128,128,128)"/><rect x="136" y="220" width="3" height="1" fill="rgb(136,136,136)"/><rect x="114" y="208" width="3" height="1" fill="rgb(161,161,161)"/><rect x="140" y="197" width="2" height="2" fill="rgb(147,147,147)"/><rect x="168" y="76" width="2" height="1" fill="rgb(133,133,133)"/><rect x="166" y="121" width="2" height="2" fill="rgb(156,156,156)"/><rect x="219" y="124" width="2" height="1" fill="rgb(107,107,107)"/><rect x="122" y="207" width="3" height="1" fill="rgb(122,122,122)"/><rect x="195" y="168" width="3" height="1" fill="rgb(148,148,148)"/><rect x="178" y="208" width="2" height="1" fill="rgb(143,143,143)"/><rect x="185" y="64" width="1" height="1" fill="rgb(148,148,148)"/><rect x="112" y="177" width="2" height="1" fill="rgb(90,90,90)"/><rect x="214" y="153" width="3" height="2" fill="rgb(151,151,151)"/><rect x="112" y="226" width="2" height="2" fill="rgb(164,164,164)"/><rect x="159" y="87" width="1" height="1" fill="rgb(131,131,131)"/><rect x="181" y="148" width="2" height="1" fill="rgb(140,140,140)"/><rect x="90" y="233" width="3" height="1" fill="rgb(107,107,107)"/><rect x="155" y="131" width="2" height="2" fill="rgb(160,160,160)"/><rect x="123" y="214" width="2" height="1" fill="rgb(116,116,116)"/><rect x="183" y="170" width="2" height="2" fill="rgb(106,106,106)"/><rect x="122" y="237" width="2" height="2" fill="rgb(159,159,159)"/><rect x="174" y="183" width="1" height="1" fill="rgb(161,161,161)"/><rect x="164" y="144" width="3" height="2" fill="rgb(158,158,158)"/><rect x="149" y="108" width="1" height="2" fill="rgb(103,103,103)"/><rect x="236" y="60" width="1" height="1" fill="rgb(124,124,124)"/><rect x="186" y="194" width="2" height="2" fill="rgb(122,122,122)"/><rect x="238" y="82" width="2" height="1" fill="rgb(159,159,159)"/><rect x="168" y="61" width="1" height="2" fill="rgb(161,161,161)"/><rect x="119" y="215" width="3" height="1" fill="rgb(155,155,155)"/><rect x="119" y="200" width="2" height="2" fill="rgb(96,96,96)"/><rect x="152" y="226" width="2" height="2" fill="rgb(96,96,96)"/><rect x="226" y="57" width="3" height="1" fill="rgb(137,137,137)"/><rect x="146" y="195" width="2" height="2" fill="rgb(114,114,114)"/><rect x="217" y="109" width="1" height="1" fill="rgb(112,112,112)"/><rect x="192" y="191" width="1" height="1" fill="rgb(125,125,125)"/><rect x="204" y="158" width="2" height="1" fill="rgb(132,132,132)"/><rect x="127" y="141" width="1" height="1" fill="rgb(131,131,131)"/><rect x="136" y="165" width="2" height="1" fill="rgb(163,163,163)"/><rect x="210" y="157" width="2" height="2" fill="rgb(118,118,118)"/><rect x="137" y="232" width="2" height="1" fill="rgb(159,159,159)"/><rect x="209" y="154" width="2" height="1" fill="rgb(132,132,132)"/><rect x="202" y="116" width="3" height="2" fill="rgb(91,91,91)"/><rect x="210" y="76" width="2" height="2" fill="rgb(121,121,121)"/><rect x="120" y="232" width="2" height="1" fill="rgb(104,104,104)"/><rect x="173" y="126" width="2" height="1" fill="rgb(156,156,156)"/><rect x="159" y="207" width="3" height="1" fill="rgb(95,95,95)"/><rect x="168" y="110" width="2" height="2" fill="rgb(100,100,100)"/><rect x="173" y="230" width="1" height="2" fill="rgb(98,98,98)"/><rect x="176" y="94" width="2" height="2" fill="rgb(144,144,144)"/><rect x="176" y="210" width="3" height="2" fill="rgb(99,99,99)"/><rect x="187" y="193" width="3" height="2" fill="rgb(132,132,132)"/><rect x="243" y="62" width="2" height="1" fill="rgb(161,161,161)"/><rect x="165" y="68" width="2" height="1" fill="rgb(139,139,139)"/><rect x="183" y="138" width="2" height="1" fill="rgb(139,139,139)"/><rect x="154" y="180" width="1" height="2" fill="rgb(164,164,164)"/><rect x="163" y="63" width="2" height="2" fill="rgb(103,103,103)"/><rect x="165" y="109" width="1" height="1" fill="rgb(146,146,146)"/><rect x="145" y="126" width="1" height="1" fill="rgb(110,110,110)"/><rect x="204" y="154" width="3" height="2" fill="rgb(127,127,127)"/><rect x="175" y="233" width="2" height="1" fill="rgb(160,160,160)"/><rect x="180" y="217" width="1" height="1" fill="rgb(163,163,163)"/><rect x="160" y="165" width="1" height="1" fill="rgb(116,116,116)"/><rect x="111" y="193" width="2" height="1" fill="rgb(142,142,142)"/><rect x="106" y="223" width="2" height="1" fill="rgb(113,113,113)"/><rect x="154" y="96" width="2" height="1" fill="rgb(113,113,113)"/><rect x="151" y="179" width="1" height="2" fill="rgb(149,149,149)"/><rect x="204" y="174" width="1" height="1" fill="rgb(102,102,102)"/><rect x="182" y="92" width="2" height="1" fill="rgb(106,106,106)"/><rect x="185" y="179" width="2" height="2" fill="rgb(98,98,98)"/><rect x="161" y="222" width="3" height="1" fill="rgb(129,129,129)"/><rect x="191" y="183" width="2" height="1" fill="rgb(144,144,144)"/><rect x="211" y="86" width="2" height="2" fill="rgb(145,145,145)"/><rect x="199" y="106" width="2" height="1" fill="rgb(149,149,149)"/><rect x="145" y="137" width="3" height="2" fill="rgb(103,103,103)"/><rect x="180" y="88" width="2" height="1" fill="rgb(158,158,158)"/><rect x="166" y="91" width="1" height="2" fill="rgb(99,99,99)"/><rect x="107" y="220" width="1" height="2" fill="rgb(164,164,164)"/><rect x="167" y="130" width="1" height="2" fill="rgb(123,123,123)"/><rect x="116" y="156" width="3" height="2" fill="rgb(109,109,109)"/><rect x="207" y="123" width="2" height="1" fill="rgb(149,149,149)"/><rect x="211" y="148" width="2" height="2" fill="rgb(91,91,91)"/><rect x="123" y="178" width="2" height="2" fill="rgb(107,107,107)"/><rect x="206" y="138" width="2" height="2" fill="rgb(151,151,151)"/><rect x="187" y="229" width="3" height="1" fill="rgb(98,98,98)"/><rect x="213" y="104" width="2" height="2" fill="rgb(136,136,136)"/><rect x="135" y="127" width="1" height="1" fill="rgb(131,131,131)"/><rect x="148" y="74" width="2" height="2" fill="rgb(123,123,123)"/><rect x="158" y="162" width="3" height="2" fill="rgb(138,138,138)"/><rect x="163" y="123" width="1" height="2" fill="rgb(122,122,122)"/><rect x="137" y="125" width="3" height="1" fill="rgb(134,134,134)"/><rect x="172" y="145" width="1" height="2" fill="rgb(107,107,107)"/><rect x="201" y="136" width="2" height="1" fill="rgb(109,109,109)"/><rect x="205" y="90" width="1" height="2" fill="rgb(119,119,119)"/><rect x="193" y="132" width="1" height="1" fill="rgb(151,151,151)"/><rect x="162" y="144" width="3" height="1" fill="rgb(121,121,121)"/><rect x="192" y="63" width="2" height="1" fill="rgb(155,155,155)"/><rect x="192" y="62" width="1" height="1" fill="rgb(123,123,123)"/><rect x="139" y="226" width="3" height="2" fill="rgb(162,162,162)"/><rect x="122" y="173" width="2" height="1" fill="rgb(117,117,117)"/><rect x="123" y="138" width="3" height="1" fill="rgb(118,118,118)"/><rect x="136" y="209" width="2" height="2" fill="rgb(155,155,155)"/><rect x="163" y="104" width="2" height="1" fill="rgb(165,165,165)"/><rect x="210" y="68" width="2" height="1" fill="rgb(92,92,92)"/><rect x="153" y="92" width="3" height="1" fill="rgb(102,102,102)"/><rect x="150" y="88" width="1" height="2" fill="rgb(154,154,154)"/><rect x="193" y="194" width="2" height="2" fill="rgb(159,159,159)"/><rect x="106" y="208" width="3" height="2" fill="rgb(143,143,143)"/><rect x="225" y="124" width="3" height="1" fill="rgb(151,151,151)"/><rect x="161" y="201" width="1" height="1" fill="rgb(107,107,107)"/><rect x="159" y="102" width="1" height="1" fill="rgb(159,159,159)"/><rect x="208" y="131" width="1" height="2" fill="rgb(156,156,156)"/><rect x="245" y="77" width="2" height="2" fill="rgb(130,130,130)"/><rect x="216" y="131" width="3" height="2" fill="rgb(164,164,164)"/><rect x="150" y="102" width="3" height="2" fill="rgb(136,136,136)"/><rect x="113" y="168" width="3" height="1" fill="rgb(142,142,142)"/><rect x="160" y="157" width="2" height="1" fill="rgb(161,161,161)"/><rect x="191" y="158" width="2" height="2" fill="rgb(134,134,134)"/><rect x="160" y="198" width="2" height="2" fill="rgb(105,105,105)"/><rect x="157" y="193" width="2" height="1" fill="rgb(117,117,117)"/><rect x="140" y="149" width="1" height="1" fill="rgb(139,139,139)"/><rect x="189" y="233" width="1" height="1" fill="rgb(150,150,150)"/><rect x="147" y="226" width="1" height="1" fill="rgb(118,118,118)"/><rect x="167" y="124" width="3" height="1" fill="rgb(156,156,156)"/><rect x="137" y="108" width="1" height="1" fill="rgb(153,153,153)"/><rect x="204" y="136" width="2" height="1" fill="rgb(94,94,94)"/><rect x="148" y="200" width="2" height="2" fill="rgb(111,111,111)"/><rect x="172" y="180" width="1" height="1" fill="rgb(101,101,101)"/><rect x="107" y="239" width="2" height="2" fill="rgb(140,140,140)"/><rect x="207" y="130" width="1" height="2" fill="rgb(98,98,98)"/><rect x="136" y="225" width="2" height="1" fill="rgb(125,125,125)"/><rect x="141" y="97" width="3" height="1" fill="rgb(163,163,163)"/><rect x="235" y="56" width="1" height="2" fill="rgb(99,99,99)"/><rect x="185" y="148" width="1" height="2" fill="rgb(122,122,122)"/><rect x="111" y="217" width="2" height="2" fill="rgb(146,146,146)"/><rect x="132" y="234" width="2" height="1" fill="rgb(148,148,148)"/><rect x="116" y="181" width="1" height="1" fill="rgb(104,104,104)"/><rect x="198" y="103" width="2" height="2" fill="rgb(119,119,119)"/><rect x="157" y="203" width="2" height="2" fill="rgb(158,158,158)"/><rect x="167" y="57" width="2" height="1" fill="rgb(101,101,101)"/><rect x="151" y="129" width="2" height="1" fill="rgb(160,160,160)"/><rect x="143" y="227" width="2" height="1" fill="rgb(163,163,163)"/><rect x="140" y="105" width="2" height="1" fill="rgb(115,115,115)"/><rect x="214" y="98" width="2" height="1" fill="rgb(119,119,119)"/><rect x="215" y="93" width="2" height="1" fill="rgb(103,103,103)"/><rect x="237" y="77" width="3" height="2" fill="rgb(90,90,90)"/><rect x="146" y="196" width="1" height="1" fill="rgb(137,137,137)"/><rect x="163" y="170" width="2" height="1" fill="rgb(113,113,113)"/><rect x="94" y="237" width="2" height="1" fill="rgb(118,118,118)"/><rect x="190" y="194" width="3" height="1" fill="rgb(159,159,159)"/><rect x="215" y="61" width="2" height="1" fill="rgb(105,105,105)"/><rect x="160" y="184" width="1" height="1" fill="rgb(116,116,116)"/><rect x="219" y="125" width="2" height="2" fill="rgb(123,123,123)"/><rect x="215" y="90" width="2" height="1" fill="rgb(133,133,133)"/><rect x="179" y="123" width="2" height="1" fill="rgb(137,137,137)"/><rect x="189" y="123" width="3" height="1" fill="rgb(163,163,163)"/><rect x="186" y="79" width="2" height="1" fill="rgb(124,124,124)"/><rect x="142" y="204" width="3" height="1" fill="rgb(108,108,108)"/><rect x="124" y="203" width="3" height="1" fill="rgb(112,112,112)"/><rect x="212" y="133" width="2" height="1" fill="rgb(128,128,128)"/><rect x="150" y="101" width="1" height="1" fill="rgb(102,102,102)"/><rect x="201" y="183" width="2" height="1" fill="rgb(102,102,102)"/><rect x="190" y="138" width="2" height="1" fill="rgb(161,161,161)"/><rect x="134" y="158" width="2" height="1" fill="rgb(142,142,142)"/><rect x="157" y="77" width="2" height="2" fill="rgb(163,163,163)"/><rect x="156" y="175" width="2" height="1" fill="rgb(131,131,131)"/><rect x="159" y="180" width="3" height="1" fill="rgb(138,138,138)"/><rect x="166" y="169" width="2" height="1" fill="rgb(133,133,133)"/><rect x="164" y="133" width="3" height="1" fill="rgb(100,100,100)"/><rect x="220" y="85" width="2" height="2" fill="rgb(127,127,127)"/><rect x="144" y="186" width="3" height="1" fill="rgb(146,146,146)"/><rect x="105" y="199" width="3" height="1" fill="rgb(111,111,111)"/><rect x="239" y="89" width="2" height="2" fill="rgb(122,122,122)"/><rect x="119" y="229" width="1" height="1" fill="rgb(111,111,111)"/><rect x="218" y="128" width="3" height="2" fill="rgb(96,96,96)"/><rect x="211" y="60" width="1" height="1" fill="rgb(123,123,123)"/><rect x="205" y="169" width="3" height="1" fill="rgb(119,119,119)"/><rect x="209" y="101" width="2" height="1" fill="rgb(157,157,157)"/><rect x="194" y="210" width="2" height="1" fill="rgb(150,150,150)"/><rect x="134" y="141" width="2" height="2" fill="rgb(146,146,146)"/><rect x="148" y="80" width="2" height="2" fill="rgb(148,148,148)"/><rect x="147" y="172" width="3" height="2" fill="rgb(158,158,158)"/><rect x="198" y="112" width="2" height="1" fill="rgb(146,146,146)"/><rect x="192" y="112" width="2" height="1" fill="rgb(91,91,91)"/><rect x="170" y="55" width="2" height="1" fill="rgb(126,126,126)"/><rect x="222" y="142" width="3" height="1" fill="rgb(128,128,128)"/><rect x="208" y="57" width="2" height="2" fill="rgb(119,119,119)"/><rect x="143" y="202" width="2" height="1" fill="rgb(161,161,161)"/><rect x="199" y="136" width="3" height="1" fill="rgb(118,118,118)"/><rect x="194" y="104" width="2" height="2" fill="rgb(124,124,124)"/><rect x="159" y="108" width="2" height="1" fill="rgb(114,114,114)"/><rect x="177" y="213" width="2" height="1" fill="rgb(148,148,148)"/><rect x="185" y="169" width="3" height="1" fill="rgb(131,131,131)"/><rect x="246" y="59" width="1" height="1" fill="rgb(103,103,103)"/><rect x="223" y="107" width="3" height="2" fill="rgb(91,91,91)"/><rect x="223" y="98" width="3" height="1" fill="rgb(133,133,133)"/><rect x="146" y="133" width="3" height="1" fill="rgb(149,149,149)"/><rect x="203" y="184" width="1" height="1" fill="rgb(97,97,97)"/><rect x="196" y="104" width="3" height="1" fill="rgb(114,114,114)"/><rect x="168" y="221" width="3" height="1" fill="rgb(105,105,105)"/><rect x="116" y="235" width="3" height="1" fill="rgb(121,121,121)"/><rect x="200" y="191" width="3" height="2" fill="rgb(102,102,102)"/><rect x="119" y="151" width="3" height="1" fill="rgb(129,129,129)"/><rect x="175" y="228" width="1" height="2" fill="rgb(160,160,160)"/><rect x="193" y="151" width="2" height="1" fill="rgb(136,136,136)"/><rect x="106" y="219" width="2" height="1" fill="rgb(120,120,120)"/><rect x="179" y="172" width="2" height="1" fill="rgb(164,164,164)"/><rect x="165" y="77" width="1" height="1" fill="rgb(164,164,164)"/><rect x="152" y="200" width="2" height="1" fill="rgb(101,101,101)"/><rect x="187" y="101" width="2" height="2" fill="rgb(97,97,97)"/><rect x="183" y="66" width="1" height="1" fill="rgb(152,152,152)"/><rect x="138" y="98" width="2" height="1" fill="rgb(114,114,114)"/><rect x="213" y="59" width="2" height="1" fill="rgb(95,95,95)"/><rect x="177" y="145" width="2" height="2" fill="rgb(152,152,152)"/><rect x="222" y="90" width="2" height="1" fill="rgb(149,149,149)"/><rect x="151" y="106" width="2" height="1" fill="rgb(157,157,157)"/><rect x="213" y="84" width="2" height="2" fill="rgb(136,136,136)"/><rect x="145" y="139" width="3" height="2" fill="rgb(113,113,113)"/><rect x="131" y="218" width="2" height="2" fill="rgb(120,120,120)"/><rect x="226" y="114" width="3" height="1" fill="rgb(157,157,157)"/><rect x="130" y="181" width="2" height="2" fill="rgb(126,126,126)"/><rect x="167" y="115" width="1" height="1" fill="rgb(156,156,156)"/><rect x="205" y="177" width="2" height="1" fill="rgb(94,94,94)"/><rect x="191" y="92" width="1" height="1" fill="rgb(163,163,163)"/><rect x="172" y="174" width="3" height="2" fill="rgb(165,165,165)"/><rect x="200" y="102" width="1" height="1" fill="rgb(116,116,116)"/><rect x="115" y="176" width="1" height="1" fill="rgb(97,97,97)"/><rect x="154" y="122" width="3" height="1" fill="rgb(97,97,97)"/><rect x="171" y="207" width="1" height="2" fill="rgb(99,99,99)"/><rect x="189" y="209" width="2" height="2" fill="rgb(102,102,102)"/><rect x="223" y="74" width="3" height="1" fill="rgb(114,114,114)"/><rect x="193" y="152" width="2" height="2" fill="rgb(161,161,161)"/><rect x="216" y="132" width="2" height="2" fill="rgb(148,148,148)"/><rect x="163" y="185" width="1" height="1" fill="rgb(113,113,113)"/><rect x="166" y="157" width="2" height="2" fill="rgb(146,146,146)"/><rect x="99" y="228" width="2" height="1" fill="rgb(142,142,142)"/><rect x="158" y="196" width="2" height="2" fill="rgb(120,120,120)"/><rect x="195" y="159" width="2" height="1" fill="rgb(147,147,147)"/><rect x="184" y="138" width="1" height="1" fill="rgb(92,92,92)"/><rect x="118" y="151" width="2" height="1" fill="rgb(128,128,128)"/><rect x="166" y="237" width="2" height="1" fill="rgb(125,125,125)"/><rect x="140" y="225" width="2" height="1" fill="rgb(94,94,94)"/><rect x="207" y="140" width="2" height="1" fill="rgb(164,164,164)"/><rect x="211" y="101" width="2" height="1" fill="rgb(163,163,163)"/><rect x="134" y="129" width="1" height="2" fill="rgb(131,131,131)"/><rect x="182" y="202" width="1" height="2" fill="rgb(128,128,128)"/><rect x="168" y="62" width="3" height="1" fill="rgb(97,97,97)"/><rect x="158" y="226" width="3" height="1" fill="rgb(105,105,105)"/><rect x="172" y="216" width="1" height="2" fill="rgb(138,138,138)"/><rect x="196" y="65" width="2" height="2" fill="rgb(162,162,162)"/><rect x="192" y="83" width="2" height="1" fill="rgb(96,96,96)"/><rect x="107" y="180" width="3" height="2" fill="rgb(163,163,163)"/><rect x="197" y="148" width="2" height="1" fill="rgb(108,108,108)"/><rect x="236" y="79" width="1" height="2" fill="rgb(141,141,141)"/><rect x="196" y="104" width="3" height="2" fill="rgb(106,106,106)"/><rect x="153" y="196" width="2" height="1" fill="rgb(140,140,140)"/><rect x="190" y="176" width="2" height="1" fill="rgb(99,99,99)"/><rect x="193" y="104" width="1" height="1" fill="rgb(142,142,142)"/><rect x="190" y="133" width="2" height="1" fill="rgb(93,93,93)"/><rect x="184" y="197" width="2" height="2" fill="rgb(146,146,146)"/><rect x="168" y="170" width="2" height="1" fill="rgb(137,137,137)"/><rect x="169" y="84" width="1" height="1" fill="rgb(96,96,96)"/><rect x="175" y="100" width="2" height="1" fill="rgb(91,91,91)"/><rect x="149" y="119" width="2" height="1" fill="rgb(150,150,150)"/><rect x="230" y="59" width="2" height="1" fill="rgb(159,159,159)"/><rect x="192" y="152" width="3" height="2" fill="rgb(108,108,108)"/><rect x="139" y="184" width="3" height="2" fill="rgb(157,157,157)"/><rect x="233" y="63" width="2" height="1" fill="rgb(124,124,124)"/><rect x="183" y="65" width="1" height="1" fill="rgb(139,139,139)"/><rect x="142" y="177" width="2" height="1" fill="rgb(92,92,92)"/><rect x="145" y="109" width="3" height="1" fill="rgb(138,138,138)"/><rect x="147" y="149" width="2" height="1" fill="rgb(158,158,158)"/><rect x="227" y="71" width="3" height="2" fill="rgb(92,92,92)"/><rect x="156" y="62" width="2" height="1" fill="rgb(152,152,152)"/><rect x="212" y="128" width="2" height="2" fill="rgb(135,135,135)"/><rect x="200" y="121" width="2" height="1" fill="rgb(122,122,122)"/><rect x="103" y="218" width="1" height="2" fill="rgb(125,125,125)"/><rect x="204" y="97" width="3" height="2" fill="rgb(107,107,107)"/><rect x="208" y="71" width="2" height="1" fill="rgb(120,120,120)"/><rect x="173" y="161" width="2" height="2" fill="rgb(132,132,132)"/><rect x="211" y="138" width="2" height="2" fill="rgb(159,159,159)"/><rect x="187" y="182" width="2" height="1" fill="rgb(157,157,157)"/><rect x="149" y="223" width="2" height="2" fill="rgb(162,162,162)"/><rect x="160" y="225" width="1" height="1" fill="rgb(130,130,130)"/><rect x="182" y="210" width="1" height="1" fill="rgb(142,142,142)"/><rect x="159" y="233" width="2" height="1" fill="rgb(114,114,114)"/><rect x="227" y="75" width="2" height="2" fill="rgb(162,162,162)"/><rect x="153" y="168" width="2" height="2" fill="rgb(93,93,93)"/><rect x="160" y="121" width="3" height="1" fill="rgb(154,154,154)"/><rect x="148" y="212" width="2" height="1" fill="rgb(139,139,139)"/><rect x="207" y="146" width="2" height="1" fill="rgb(94,94,94)"/><rect x="128" y="131" width="2" height="1" fill="rgb(118,118,118)"/><rect x="102" y="192" width="2" height="1" fill="rgb(112,112,112)"/><rect x="91" y="227" width="3" height="2" fill="rgb(131,131,131)"/><rect x="104" y="215" width="3" height="1" fill="rgb(95,95,95)"/><rect x="130" y="167" width="2" height="1" fill="rgb(163,163,163)"/><rect x="161" y="165" width="1" height="2" fill="rgb(103,103,103)"/><rect x="14" y="293" width="1" height="1" fill="rgb(186,186,186)"/><rect x="15" y="316" width="1" height="3" fill="rgb(169,169,169)"/><rect x="13" y="310" width="1" height="1" fill="rgb(157,157,157)"/><rect x="14" y="290" width="2" height="2" fill="rgb(141,141,141)"/><rect x="13" y="285" width="1" height="3" fill="rgb(186,186,186)"/><rect x="12" y="416" width="3" height="2" fill="rgb(131,131,131)"/><rect x="10" y="367" width="3" height="3" fill="rgb(189,189,189)"/><rect x="11" y="207" width="2" height="1" fill="rgb(142,142,142)"/><rect x="14" y="293" width="1" height="2" fill="rgb(131,131,131)"/><rect x="13" y="238" width="3" height="1" fill="rgb(211,211,211)"/><rect x="10" y="369" width="3" height="2" fill="rgb(201,201,201)"/><rect x="12" y="269" width="2" height="3" fill="rgb(221,221,221)"/><rect x="13" y="435" width="1" height="2" fill="rgb(190,190,190)"/><rect x="14" y="274" width="2" height="3" fill="rgb(231,231,231)"/><rect x="10" y="349" width="1" height="1" fill="rgb(218,218,218)"/><rect x="12" y="364" width="2" height="3" fill="rgb(218,218,218)"/><rect x="11" y="431" width="1" height="1" fill="rgb(235,235,235)"/><rect x="10" y="206" width="3" height="2" fill="rgb(121,121,121)"/><rect x="14" y="295" width="3" height="1" fill="rgb(197,197,197)"/><rect x="10" y="410" width="3" height="3" fill="rgb(180,180,180)"/><rect x="12" y="293" width="3" height="3" fill="rgb(120,120,120)"/><rect x="12" y="237" width="3" height="3" fill="rgb(191,191,191)"/><rect x="10" y="393" width="1" height="1" fill="rgb(127,127,127)"/><rect x="9" y="348" width="1" height="3" fill="rgb(193,193,193)"/><rect x="11" y="398" width="1" height="1" fill="rgb(133,133,133)"/><rect x="10" y="283" width="3" height="2" fill="rgb(198,198,198)"/><rect x="13" y="350" width="3" height="3" fill="rgb(142,142,142)"/><rect x="13" y="433" width="2" height="1" fill="rgb(131,131,131)"/><rect x="11" y="379" width="2" height="1" fill="rgb(217,217,217)"/><rect x="12" y="286" width="2" height="2" fill="rgb(137,137,137)"/><rect x="14" y="203" width="2" height="3" fill="rgb(172,172,172)"/><rect x="13" y="313" width="3" height="1" fill="rgb(133,133,133)"/><rect x="15" y="325" width="3" height="1" fill="rgb(181,181,181)"/><rect x="13" y="367" width="3" height="2" fill="rgb(174,174,174)"/><rect x="11" y="336" width="3" height="3" fill="rgb(199,199,199)"/><rect x="10" y="266" width="3" height="2" fill="rgb(186,186,186)"/><rect x="12" y="368" width="1" height="3" fill="rgb(149,149,149)"/><rect x="15" y="363" width="1" height="1" fill="rgb(123,123,123)"/><rect x="14" y="296" width="3" height="1" fill="rgb(222,222,222)"/><rect x="11" y="337" width="1" height="2" fill="rgb(164,164,164)"/><rect x="13" y="322" width="1" height="3" fill="rgb(145,145,145)"/><rect x="11" y="358" width="1" height="2" fill="rgb(158,158,158)"/><rect x="11" y="308" width="1" height="1" fill="rgb(207,207,207)"/><rect x="11" y="261" width="3" height="3" fill="rgb(123,123,123)"/><rect x="10" y="396" width="2" height="3" fill="rgb(181,181,181)"/><rect x="14" y="419" width="3" height="1" fill="rgb(181,181,181)"/><rect x="12" y="212" width="3" height="2" fill="rgb(179,179,179)"/><rect x="11" y="383" width="3" height="1" fill="rgb(226,226,226)"/><rect x="12" y="312" width="3" height="2" fill="rgb(191,191,191)"/><rect x="10" y="316" width="3" height="2" fill="rgb(222,222,222)"/><rect x="14" y="419" width="1" height="1" fill="rgb(155,155,155)"/><rect x="11" y="399" width="2" height="3" fill="rgb(188,188,188)"/><rect x="12" y="399" width="2" height="1" fill="rgb(196,196,196)"/><rect x="14" y="202" width="2" height="3" fill="rgb(229,229,229)"/><rect x="9" y="256" width="2" height="1" fill="rgb(183,183,183)"/><rect x="11" y="409" width="2" height="1" fill="rgb(187,187,187)"/><rect x="10" y="252" width="1" height="1" fill="rgb(236,236,236)"/><rect x="12" y="195" width="2" height="3" fill="rgb(139,139,139)"/><rect x="15" y="222" width="3" height="3" fill="rgb(159,159,159)"/><rect x="10" y="381" width="1" height="3" fill="rgb(206,206,206)"/><rect x="10" y="440" width="1" height="2" fill="rgb(169,169,169)"/><rect x="12" y="364" width="1" height="2" fill="rgb(239,239,239)"/><rect x="14" y="182" width="1" height="2" fill="rgb(179,179,179)"/><rect x="10" y="412" width="3" height="3" fill="rgb(159,159,159)"/><rect x="14" y="176" width="3" height="1" fill="rgb(161,161,161)"/><rect x="11" y="225" width="3" height="2" fill="rgb(218,218,218)"/><rect x="10" y="290" width="1" height="1" fill="rgb(155,155,155)"/><rect x="15" y="201" width="3" height="3" fill="rgb(133,133,133)"/><rect x="11" y="226" width="2" height="2" fill="rgb(138,138,138)"/><rect x="14" y="427" width="3" height="1" fill="rgb(141,141,141)"/><rect x="13" y="189" width="2" height="3" fill="rgb(176,176,176)"/><rect x="9" y="184" width="3" height="1" fill="rgb(133,133,133)"/><rect x="10" y="274" width="2" height="1" fill="rgb(210,210,210)"/><rect x="13" y="332" width="3" height="3" fill="rgb(177,177,177)"/><rect x="11" y="338" width="1" height="3" fill="rgb(217,217,217)"/><rect x="12" y="352" width="2" height="3" fill="rgb(136,136,136)"/><rect x="14" y="195" width="3" height="2" fill="rgb(132,132,132)"/><rect x="13" y="294" width="3" height="2" fill="rgb(180,180,180)"/><rect x="10" y="233" width="3" height="2" fill="rgb(236,236,236)"/><rect x="10" y="269" width="3" height="2" fill="rgb(220,220,220)"/><rect x="11" y="404" width="2" height="1" fill="rgb(128,128,128)"/><rect x="11" y="299" width="2" height="1" fill="rgb(156,156,156)"/><rect x="13" y="379" width="1" height="3" fill="rgb(133,133,133)"/><rect x="13" y="280" width="1" height="2" fill="rgb(191,191,191)"/><rect x="14" y="347" width="3" height="2" fill="rgb(171,171,171)"/><rect x="10" y="331" width="1" height="3" fill="rgb(140,140,140)"/><rect x="11" y="435" width="2" height="1" fill="rgb(224,224,224)"/><rect x="12" y="359" width="2" height="3" fill="rgb(220,220,220)"/><rect x="13" y="263" width="1" height="3" fill="rgb(205,205,205)"/><rect x="15" y="191" width="3" height="2" fill="rgb(134,134,134)"/><rect x="12" y="331" width="3" height="1" fill="rgb(225,225,225)"/><rect x="11" y="291" width="2" height="1" fill="rgb(196,196,196)"/><rect x="14" y="200" width="2" height="2" fill="rgb(183,183,183)"/><rect x="9" y="345" width="1" height="1" fill="rgb(233,233,233)"/><rect x="14" y="328" width="1" height="1" fill="rgb(204,204,204)"/><rect x="12" y="211" width="2" height="3" fill="rgb(193,193,193)"/><rect x="10" y="292" width="2" height="2" fill="rgb(192,192,192)"/><rect x="13" y="386" width="2" height="3" fill="rgb(237,237,237)"/><rect x="10" y="264" width="1" height="3" fill="rgb(185,185,185)"/><rect x="10" y="280" width="2" height="1" fill="rgb(167,167,167)"/></g>
<rect x="80" y="289" width="14" height="14" transform="rotate(-20 87 296)" fill="#666"/>
<g mask="url(#mA)"><rect x="9" y="35" width="260" height="420" filter="url(#cloudA)" opacity="0.5"/></g>
<g mask="url(#mB)"><g filter="url(#blur)"><rect x="5" y="400" width="20.5" height="20.5" fill="rgb(130,130,130)"/><rect x="25" y="400" width="20.5" height="20.5" fill="rgb(130,130,130)"/><rect x="45" y="400" width="20.5" height="20.5" fill="rgb(130,130,130)"/><rect x="65" y="400" width="20.5" height="20.5" fill="rgb(130,130,130)"/><rect x="85" y="400" width="20.5" height="20.5" fill="rgb(140,140,140)"/><rect x="105" y="400" width="20.5" height="20.5" fill="rgb(170,170,170)"/><rect x="125" y="400" width="20.5" height="20.5" fill="rgb(200,200,200)"/><rect x="145" y="400" width="20.5" height="20.5" fill="rgb(200,200,200)"/><rect x="5" y="420" width="20.5" height="20.5" fill="rgb(130,130,130)"/><rect x="25" y="420" width="20.5" height="20.5" fill="rgb(130,130,130)"/><rect x="45" y="420" width="20.5" height="20.5" fill="rgb(130,130,130)"/><rect x="65" y="420" width="20.5" height="20.5" fill="rgb(130,130,130)"/><rect x="85" y="420" width="20.5" height="20.5" fill="rgb(130,130,130)"/><rect x="105" y="420" width="20.5" height="20.5" fill="rgb(180,180,180)"/><rect x="125" y="420" width="20.5" height="20.5" fill="rgb(210,210,210)"/><rect x="145" y="420" width="20.5" height="20.5" fill="rgb(210,210,210)"/><rect x="5" y="440" width="20.5" height="20.5" fill="rgb(170,170,170)"/><rect x="25" y="440" width="20.5" height="20.5" fill="rgb(150,150,150)"/><rect x="45" y="440" width="20.5" height="20.5" fill="rgb(160,160,160)"/><rect x="65" y="440" width="20.5" height="20.5" fill="rgb(170,170,170)"/><rect x="85" y="440" width="20.5" height="20.5" fill="rgb(175,175,175)"/><rect x="105" y="440" width="20.5" height="20.5" fill="rgb(215,215,215)"/><rect x="125" y="440" width="20.5" height="20.5" fill="rgb(215,215,215)"/><rect x="145" y="440" width="20.5" height="20.5" fill="rgb(215,215,215)"/><rect x="5" y="460" width="20.5" height="20.5" fill="rgb(180,180,180)"/><rect x="25" y="460" width="20.5" height="20.5" fill="rgb(165,165,165)"/><rect x="45" y="460" width="20.5" height="20.5" fill="rgb(130,130,130)"/><rect x="65" y="460" width="20.5" height="20.5" fill="rgb(165,165,165)"/><rect x="85" y="460" width="20.5" height="20.5" fill="rgb(190,190,190)"/><rect x="105" y="460" width="20.5" height="20.5" fill="rgb(215,215,215)"/><rect x="125" y="460" width="20.5" height="20.5" fill="rgb(215,215,215)"/><rect x="145" y="460" width="20.5" height="20.5" fill="rgb(215,215,215)"/><rect x="5" y="480" width="20.5" height="20.5" fill="rgb(150,150,150)"/><rect x="25" y="480" width="20.5" height="20.5" fill="rgb(150,150,150)"/><rect x="45" y="480" width="20.5" height="20.5" fill="rgb(160,160,160)"/><rect x="65" y="480" width="20.5" height="20.5" fill="rgb(180,180,180)"/><rect x="85" y="480" width="20.5" height="20.5" fill="rgb(205,205,205)"/><rect x="105" y="480" width="20.5" height="20.5" fill="rgb(215,215,215)"/><rect x="125" y="480" width="20.5" height="20.5" fill="rgb(215,215,215)"/><rect x="145" y="480" width="20.5" height="20.5" fill="rgb(215,215,215)"/><rect x="5" y="500" width="20.5" height="20.5" fill="rgb(90,90,90)"/><rect x="25" y="500" width="20.5" height="20.5" fill="rgb(105,105,105)"/><rect x="45" y="500" width="20.5" height="20.5" fill="rgb(170,170,170)"/><rect x="65" y="500" width="20.5" height="20.5" fill="rgb(180,180,180)"/><rect x="85" y="500" width="20.5" height="20.5" fill="rgb(210,210,210)"/><rect x="105" y="500" width="20.5" height="20.5" fill="rgb(210,210,210)"/><rect x="125" y="500" width="20.5" height="20.5" fill="rgb(210,210,210)"/><rect x="145" y="500" width="20.5" height="20.5" fill="rgb(210,210,210)"/><rect x="5" y="520" width="20.5" height="20.5" fill="rgb(80,80,80)"/><rect x="25" y="520" width="20.5" height="20.5" fill="rgb(90,90,90)"/><rect x="45" y="520" width="20.5" height="20.5" fill="rgb(136,136,136)"/><rect x="65" y="520" width="20.5" height="20.5" fill="rgb(185,185,185)"/><rect x="85" y="520" width="20.5" height="20.5" fill="rgb(200,200,200)"/><rect x="105" y="520" width="20.5" height="20.5" fill="rgb(200,200,200)"/><rect x="125" y="520" width="20.5" height="20.5" fill="rgb(200,200,200)"/><rect x="145" y="520" width="20.5" height="20.5" fill="rgb(200,200,200)"/><rect x="5" y="540" width="20.5" height="20.5" fill="rgb(122,122,122)"/><rect x="25" y="540" width="20.5" height="20.5" fill="rgb(90,90,90)"/><rect x="45" y="540" width="20.5" height="20.5" fill="rgb(125,125,125)"/><rect x="65" y="540" width="20.5" height="20.5" fill="rgb(185,185,185)"/><rect x="85" y="540" width="20.5" height="20.5" fill="rgb(190,190,190)"/><rect x="105" y="540" width="20.5" height="20.5" fill="rgb(190,190,190)"/><rect x="125" y="540" width="20.5" height="20.5" fill="rgb(190,190,190)"/><rect x="145" y="540" width="20.5" height="20.5" fill="rgb(190,190,190)"/><rect x="5" y="560" width="20.5" height="20.5" fill="rgb(138,138,138)"/><rect x="25" y="560" width="20.5" height="20.5" fill="rgb(95,95,95)"/><rect x="45" y="560" width="20.5" height="20.5" fill="rgb(135,135,135)"/><rect x="65" y="560" width="20.5" height="20.5" fill="rgb(185,185,185)"/><rect x="85" y="560" width="20.5" height="20.5" fill="rgb(190,190,190)"/><rect x="105" y="560" width="20.5" height="20.5" fill="rgb(190,190,190)"/><rect x="125" y="560" width="20.5" height="20.5" fill="rgb(190,190,190)"/><rect x="145" y="560" width="20.5" height="20.5" fill="rgb(190,190,190)"/><rect x="5" y="580" width="20.5" height="20.5" fill="rgb(100,100,100)"/><rect x="25" y="580" width="20.5" height="20.5" fill="rgb(110,110,110)"/><rect x="45" y="580" width="20.5" height="20.5" fill="rgb(170,170,170)"/><rect x="65" y="580" width="20.5" height="20.5" fill="rgb(200,200,200)"/><rect x="85" y="580" width="20.5" height="20.5" fill="rgb(200,200,200)"/><rect x="105" y="580" width="20.5" height="20.5" fill="rgb(200,200,200)"/><rect x="125" y="580" width="20.5" height="20.5" fill="rgb(200,200,200)"/><rect x="145" y="580" width="20.5" height="20.5" fill="rgb(200,200,200)"/><rect x="5" y="600" width="20.5" height="20.5" fill="rgb(150,150,150)"/><rect x="25" y="600" width="20.5" height="20.5" fill="rgb(180,180,180)"/><rect x="45" y="600" width="20.5" height="20.5" fill="rgb(220,220,220)"/><rect x="65" y="600" width="20.5" height="20.5" fill="rgb(220,220,220)"/><rect x="85" y="600" width="20.5" height="20.5" fill="rgb(220,220,220)"/><rect x="105" y="600" width="20.5" height="20.5" fill="rgb(220,220,220)"/><rect x="125" y="600" width="20.5" height="20.5" fill="rgb(220,220,220)"/><rect x="145" y="600" width="20.5" height="20.5" fill="rgb(220,220,220)"/><rect x="5" y="620" width="20.5" height="20.5" fill="rgb(160,160,160)"/><rect x="25" y="620" width="20.5" height="20.5" fill="rgb(195,195,195)"/><rect x="45" y="620" width="20.5" height="20.5" fill="rgb(220,220,220)"/><rect x="65" y="620" width="20.5" height="20.5" fill="rgb(220,220,220)"/><rect x="85" y="620" width="20.5" height="20.5" fill="rgb(220,220,220)"/><rect x="105" y="620" width="20.5" height="20.5" fill="rgb(220,220,220)"/><rect x="125" y="620" width="20.5" height="20.5" fill="rgb(220,220,220)"/><rect x="145" y="620" width="20.5" height="20.5" fill="rgb(220,220,220)"/><rect x="5" y="640" width="20.5" height="20.5" fill="rgb(180,180,180)"/><rect x="25" y="640" width="20.5" height="20.5" fill="rgb(215,215,215)"/><rect x="45" y="640" width="20.5" height="20.5" fill="rgb(220,220,220)"/><rect x="65" y="640" width="20.5" height="20.5" fill="rgb(220,220,220)"/><rect x="85" y="640" width="20.5" height="20.5" fill="rgb(220,220,220)"/><rect x="105" y="640" width="20.5" height="20.5" fill="rgb(220,220,220)"/><rect x="125" y="640" width="20.5" height="20.5" fill="rgb(220,220,220)"/><rect x="145" y="640" width="20.5" height="20.5" fill="rgb(220,220,220)"/><rect x="5" y="660" width="20.5" height="20.5" fill="rgb(195,195,195)"/><rect x="25" y="660" width="20.5" height="20.5" fill="rgb(220,220,220)"/><rect x="45" y="660" width="20.5" height="20.5" fill="rgb(220,220,220)"/><rect x="65" y="660" width="20.5" height="20.5" fill="rgb(220,220,220)"/><rect x="85" y="660" width="20.5" height="20.5" fill="rgb(220,220,220)"/><rect x="105" y="660" width="20.5" height="20.5" fill="rgb(220,220,220)"/><rect x="125" y="660" width="20.5" height="20.5" fill="rgb(220,220,220)"/><rect x="145" y="660" width="20.5" height="20.5" fill="rgb(220,220,220)"/><rect x="5" y="680" width="20.5" height="20.5" fill="rgb(210,210,210)"/><rect x="25" y="680" width="20.5" height="20.5" fill="rgb(220,220,220)"/><rect x="45" y="680" width="20.5" height="20.5" fill="rgb(220,220,220)"/><rect x="65" y="680" width="20.5" height="20.5" fill="rgb(220,220,220)"/><rect x="85" y="680" width="20.5" height="20.5" fill="rgb(220,220,220)"/><rect x="105" y="680" width="20.5" height="20.5" fill="rgb(220,220,220)"/><rect x="125" y="680" width="20.5" height="20.5" fill="rgb(220,220,220)"/><rect x="145" y="680" width="20.5" height="20.5" fill="rgb(220,220,220)"/><rect x="5" y="700" width="20.5" height="20.5" fill="rgb(225,225,225)"/><rect x="25" y="700" width="20.5" height="20.5" fill="rgb(225,225,225)"/><rect x="45" y="700" width="20.5" height="20.5" fill="rgb(225,225,225)"/><rect x="65" y="700" width="20.5" height="20.5" fill="rgb(225,225,225)"/><rect x="85" y="700" width="20.5" height="20.5" fill="rgb(225,225,225)"/><rect x="105" y="700" width="20.5" height="20.5" fill="rgb(225,225,225)"/><rect x="125" y="700" width="20.5" height="20.5" fill="rgb(225,225,225)"/><rect x="145" y="700" width="20.5" height="20.5" fill="rgb(225,225,225)"/><rect x="5" y="720" width="20.5" height="20.5" fill="rgb(225,225,225)"/><rect x="25" y="720" width="20.5" height="20.5" fill="rgb(225,225,225)"/><rect x="45" y="720" width="20.5" height="20.5" fill="rgb(225,225,225)"/><rect x="65" y="720" width="20.5" height="20.5" fill="rgb(225,225,225)"/><rect x="85" y="720" width="20.5" height="20.5" fill="rgb(225,225,225)"/><rect x="105" y="720" width="20.5" height="20.5" fill="rgb(225,225,225)"/><rect x="125" y="720" width="20.5" height="20.5" fill="rgb(225,225,225)"/><rect x="145" y="720" width="20.5" height="20.5" fill="rgb(225,225,225)"/></g>
<polygon points="268.0,35.0 259.0,60.0 249.0,91.0 239.0,120.0 227.4,150.0 222.5,166.5 215.0,183.0 208.5,199.0 202.7,216.0 198.6,230.0 191.0,249.0 185.4,265.0 180.5,280.0 174.8,294.0 169.2,308.0 163.5,322.0 157.9,336.5 153.0,350.6 148.7,364.7 142.4,378.8 138.0,393.0 132.5,406.5 127.5,423.0 119.3,439.4 114.4,456.0 109.4,472.4 99.5,489.0 92.0,505.0 89.0,523.0 84.0,536.0 80.0,549.0 72.5,562.0 68.6,575.0 63.4,588.0 59.5,601.0 55.6,614.0 47.0,631.0 38.0,646.0 34.0,661.0 27.5,676.0 21.0,692.0 16.0,707.0 10.0,719.0 9.0,722.0 9.0,722.0 9.0,719.0 9.0,707.0 9.0,692.0 13.5,676.0 20.0,661.0 24.0,646.0 33.0,631.0 41.6,614.0 45.5,601.0 49.4,588.0 54.6,575.0 58.5,562.0 66.0,549.0 70.0,536.0 75.0,523.0 78.0,505.0 85.5,489.0 95.4,472.4 100.4,456.0 105.3,439.4 113.5,423.0 118.5,406.5 124.0,393.0 128.4,378.8 134.7,364.7 139.0,350.6 143.9,336.5 149.5,322.0 155.2,308.0 160.8,294.0 166.5,280.0 171.4,265.0 177.0,249.0 184.6,230.0 188.7,216.0 194.5,199.0 201.0,183.0 208.5,166.5 213.4,150.0 225.0,120.0 235.0,91.0 245.0,60.0 254.0,35.0" fill="#f2f2f2" opacity="0.55"/></g>
</g><polygon points="61.1,532.3 63.2,529.5 66.0,528.1 65.3,530.2 62.5,533.0" fill="#000"/><polygon points="53.2,545.9 55.3,543.8 57.4,545.2 59.5,548.7 58.1,552.2 55.3,550.8 53.9,548.7" fill="#000"/><polygon points="66.0,538.9 68.1,537.5 70.9,539.5 70.2,543.0 68.1,544.5 66.7,541.6" fill="#000"/><polygon points="63.1,561.6 65.2,560.2 68.0,561.6 68.8,564.4 66.0,565.8 63.9,564.4" fill="#000"/><polygon points="55.1,577.5 57.2,576.1 60.0,577.5 60.8,580.3 58.0,581.0 55.9,579.6" fill="#000"/><polygon points="50.9,597.5 53.0,596.1 55.1,598.2 54.4,601.0 51.6,600.3" fill="#000"/><polygon points="72.0,541.6 74.8,540.9 76.9,543.0 75.5,545.1 72.7,544.4" fill="#000"/><polygon points="76.6,525.3 78.7,523.9 79.4,526.7 77.3,528.1" fill="#000"/><polygon points="58.8,588.1 60.9,586.8 62.2,588.9 60.1,590.2" fill="#000"/><polygon points="48.6,568.2 50.7,566.8 51.4,569.6 49.3,570.3" fill="#000"/><polygon points="68.8,553.3 70.8,551.9 72.2,554.7 70.2,556.1" fill="#000"/><g>
</g></g>
<rect x="16" y="35" width="64" height="407" fill="#000"/>
<rect x="56.5" y="77.5" width="18" height="353" fill="none" stroke="#fff" stroke-width="1"/>
<rect x="57" y="78" width="17" height="32" fill="#ffffff"/>
<rect x="57" y="110" width="17" height="32" fill="#e4e4e4"/>
<rect x="57" y="142" width="17" height="32" fill="#cbcbcb"/>
<rect x="57" y="174" width="17" height="32" fill="#b2b2b2"/>
<rect x="57" y="206" width="17" height="32" fill="#999999"/>
<rect x="57" y="238" width="17" height="32" fill="#808080"/>
<rect x="57" y="270" width="17" height="32" fill="#676767"/>
<rect x="57" y="302" width="17" height="32" fill="#4e4e4e"/>
<rect x="57" y="334" width="17" height="32" fill="#353535"/>
<rect x="57" y="366" width="17" height="32" fill="#212121"/>
<rect x="57" y="398" width="17" height="32" fill="#0e0e0e"/>
<g shape-rendering="crispEdges">
<rect x="8" y="35" width="1" height="765" fill="#00ffff"/>
<rect x="147" y="35" width="1" height="765" fill="#00ffff"/>
<rect x="286" y="35" width="1" height="765" fill="#00ffff"/>
<rect x="425" y="35" width="1" height="765" fill="#00ffff"/>
<rect x="564" y="35" width="1" height="765" fill="#00ffff"/>
<rect x="703" y="35" width="1" height="765" fill="#00ffff"/>
<rect x="842" y="35" width="1" height="765" fill="#00ffff"/>
<rect x="981" y="35" width="1" height="765" fill="#00ffff"/>
<rect x="1120" y="35" width="1" height="765" fill="#00ffff"/>
<rect x="8" y="91" width="960" height="1" fill="#00ffff"/>
<rect x="990" y="91" width="131" height="1" fill="#00ffff"/>
<rect x="8" y="230" width="963" height="1" fill="#00ffff"/>
<rect x="998" y="230" width="123" height="1" fill="#00ffff"/>
<rect x="8" y="368" width="963" height="1" fill="#00ffff"/>
<rect x="998" y="368" width="123" height="1" fill="#00ffff"/>
<rect x="8" y="507" width="960" height="1" fill="#00ffff"/>
<rect x="1001" y="507" width="120" height="1" fill="#00ffff"/>
<rect x="8" y="646" width="960" height="1" fill="#00ffff"/>
<rect x="1002" y="646" width="119" height="1" fill="#00ffff"/>
<rect x="8" y="785" width="1113" height="1" fill="#00ffff"/>
<g fill="#0c0c0c"><rect x="970" y="84" width="20" height="11"/><rect x="972" y="223" width="26" height="11"/><rect x="972" y="361" width="26" height="11"/><rect x="970" y="500" width="31" height="11"/><rect x="970" y="639" width="32" height="11"/></g>
</g>
<polyline points="841.9,4.1 840.0,8.5 838.7,18.8 837.5,24.5 837.2,35.8 833.5,42.4 829.7,49.9 825.0,58.4 828.7,60.2 834.0,61.2 830.5,63.0 831.5,71.5 830.5,76.2 827.8,73.4 824.0,75.3 826.9,80.0 831.5,83.8 837.2,86.6 841.0,85.6 834.4,88.1 827.8,86.6 825.0,85.6 824.0,90.4 823.1,102.6 818.4,109.2 813.7,111.0 810.9,113.9 812.7,122.4 817.4,131.8 822.1,137.4 823.1,143.0 829.7,152.5 831.8,157.5 843.1,168.8 850.6,173.5 861.0,185.8 867.6,190.5 871.3,198.0 877.0,201.8 880.7,207.4 892.0,216.8 893.0,220.6 897.7,230.0 902.4,238.5 904.3,243.2 902.4,247.9 907.1,256.4 910.9,257.7 920.3,256.9 925.0,254.5 923.1,257.3 912.7,260.7 907.1,262.6 908.0,265.8 913.7,276.1 921.2,283.6 922.1,293.1 924.5,300.0 931.1,313.2 935.8,318.8 937.3,324.5 937.7,332.9 933.9,334.8 930.1,339.5 926.0,344.2 931.1,350.8 932.0,360.2 935.8,368.7 941.4,379.0 946.1,385.6 949.9,397.9 948.0,409.2 947.1,422.4 945.2,429.9 937.7,439.3 931.1,441.2 924.5,446.8 923.6,451.5 921.5,455.6 917.7,458.5 913.0,463.2 913.0,468.8 912.0,476.4 909.2,479.2 907.3,491.4 905.4,500.8 903.5,507.4 900.7,514.9 898.9,524.4 895.1,528.1 890.9,531.9 892.8,535.6 894.1,546.0 892.3,561.1 890.9,572.4 891.3,585.5 895.1,594.9 898.9,603.4 907.8,612.2 915.3,623.5 920.0,632.9 925.7,645.2 927.6,649.9 932.3,655.5 937.0,669.6 940.7,676.2 947.3,684.7 953.0,696.0 957.7,701.6 966.1,711.1 969.0,721.4 968.6,728.0 966.1,731.8 967.5,739.3 965.7,741.9 967.6,745.2 967.6,756.0 966.8,756.9 966.8,763.5 970.9,770.1 971.3,773.4 976.0,779.1 976.5,784.2 977.7,786.1 976.8,790.8 977.0,798.4 978.1,799.5" fill="none" stroke="#fff" stroke-width="1" shape-rendering="crispEdges"/>
<ellipse cx="748.5" cy="84" rx="3.4" ry="4.3" transform="rotate(25 748.5 84)" fill="none" stroke="#fff" stroke-width="1" shape-rendering="crispEdges"/>
<g class="mono" fill="#fff" font-size="12.5" letter-spacing="0.5">
<text x="36" y="53">R.65</text>
<text x="39" y="66" letter-spacing="-0.3">(--)</text>
<text x="19" y="82">1.OO</text>
<text x="19" y="114">O.8O</text>
<text x="19" y="146">O.7O</text>
<text x="19" y="178">O.6O</text>
<text x="19" y="210">O.5O</text>
<text x="19" y="242">O.4O</text>
<text x="19" y="274">O.3O</text>
<text x="19" y="306">O.25</text>
<text x="19" y="338">O.2O</text>
<text x="19" y="370">O.15</text>
<text x="19" y="402">O.1O</text>
<text x="19" y="434">O.OO</text>
</g>
<text class="mono" x="31" y="72" fill="#f0a070" font-size="12.5" letter-spacing="-1.6">(K)</text>

<text class="sans" x="9" y="27" fill="#ffbb00" font-size="10.6">NASA Langley (M04.0)</text>
<text class="sans" x="400" y="16" fill="#fff" font-size="16" letter-spacing="0.2">0.65um Reflectance</text>
<text class="sans" x="371.5" y="34" fill="#fff" font-size="15" letter-spacing="-0.5">Jul 18, 2017 18:45 UTC</text>
<text class="mono" xml:space="preserve" style="white-space:pre" x="305" y="847" fill="#fff" font-size="12.5" letter-spacing="1.5">MT10  0.65UM REFLECTANCE   JUL 18, 2017 18:45Z   NASA LARC</text>
<g class="mono" fill="#ff0000" font-size="12.5" letter-spacing="0.5">
<text x="140" y="34">15W</text>
<text x="277" y="34">1OW</text>
<text x="424" y="34">5W</text>
<text x="558" y="34">O</text>
<text x="703" y="34">5E</text>
<text x="835" y="34">1OE</text>
<text x="976" y="34">15E</text>
<text x="975" y="94">O</text>
<text x="980" y="233">5S</text>
<text x="974" y="371">1OS</text>
<text x="976" y="510">15S</text>
<text x="975" y="649">2OS</text>
</g>
</svg>
</body></html>
